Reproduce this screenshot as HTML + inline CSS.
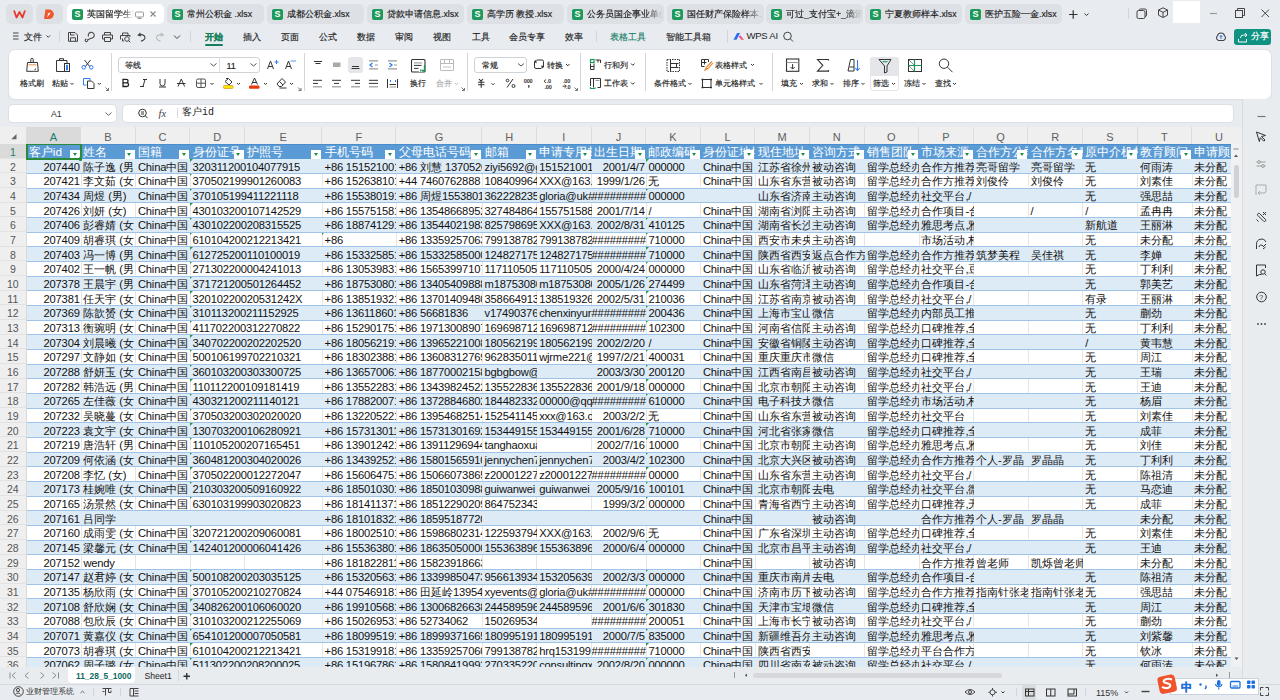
<!DOCTYPE html>
<html><head><meta charset="utf-8">
<style>
*{box-sizing:border-box;margin:0;padding:0}
html,body{width:1280px;height:700px;overflow:hidden}
body{position:relative;background:#e8ebef;font-family:"Liberation Sans",sans-serif;color:#222;font-size:12px}
.a{position:absolute;white-space:nowrap}
/* tabs */
.tab{position:absolute;top:4px;height:20px;width:97px;background:#dde0e5;border-radius:5px;overflow:hidden}
.tab.act{background:#fff}
.tab .s{position:absolute;left:5px;top:4.6px;width:11px;height:11px;background:#1d9a5b;border-radius:2px;color:#fff;font-size:9px;font-weight:bold;text-align:center;line-height:11px}
.tab .t{position:absolute;left:20px;top:2.2px;line-height:16px;font-size:8.8px;color:#1a1a1a;white-space:nowrap;width:76px;overflow:hidden;-webkit-text-stroke:0.15px #1a1a1a}
.tab .t.fd{-webkit-mask-image:linear-gradient(90deg,#000 78%,transparent 100%)}
.vl{position:absolute;top:0;width:1px;height:14px;background:#e6e6e6}
.apptab{position:absolute;top:4px;height:20px;width:27px;background:#dde0e5;border-radius:5px}
/* menu */
.menu{position:absolute;top:29.5px;font-size:8.8px;color:#1f1f1f;line-height:14px;white-space:nowrap;-webkit-text-stroke:0.15px currentColor}
.sep{position:absolute;width:1px;background:#d2d5d9}
/* ribbon */
#ribbon{position:absolute;left:9px;top:50px;width:1262px;height:49px;background:#fff;border-radius:6px;box-shadow:0 0 0 1px #dde0e4,0 1px 2px rgba(0,0,0,.05)}
.l{position:absolute;font-size:8.2px;color:#1a1a1a;white-space:nowrap;line-height:12px;-webkit-text-stroke:0.15px #1a1a1a}
.l.g{-webkit-text-stroke:0.15px #aaa}
.l.g{color:#aaa}
#icons{position:absolute;left:0;top:0;width:1280px;height:700px;pointer-events:none}
/* formula */
.box{position:absolute;background:#fff;border-radius:4px;box-shadow:0 0 0 1px #dcdfe3}
/* grid */
#colhdr{position:absolute;left:0;top:127px;width:1242px;height:17px;background:#efefef;overflow:hidden}
.ch{position:absolute;top:0;height:17px;line-height:21px;text-align:center;font-size:11px;color:#606060;border-right:1px solid #dddddd}
.ch.sel{background:#dadada;color:#1b7f6e}
.corner{position:absolute;left:0;top:0;width:26.6px;height:17px;border-right:1px solid #dddddd}
#grid{position:absolute;left:0;top:144px;width:1231px;height:522.7px;overflow:hidden;background:#fff}
.rh{position:absolute;left:0;width:26.6px;height:14.67px;background:#efefef;color:#555;font-size:10.5px;text-align:center;line-height:16.5px;border-bottom:1px solid #e2e2e2;border-right:1px solid #d8d8d8}
.rh.rsel{background:#dadada;color:#1b7f6e}
.row{position:absolute;left:26.6px;width:1220px;height:14.67px;background:#fff}
.row:after{content:'';position:absolute;left:0;right:0;bottom:-0.7px;height:1px;background:#9dc3e6;z-index:1}
.row.hdr:after{display:none}
.row.band{background:#ddebf7}
.row.hdr{background:#5b9bd5;border-top:1px solid #4a8ccc}
.c{position:absolute;top:0;height:14px;line-height:16px;font-size:11.2px;letter-spacing:-0.2px;color:#111;white-space:nowrap;overflow:hidden;padding-left:2.2px}
.c i{font-style:normal;font-size:11.3px;letter-spacing:0}
.c.r{text-align:right;padding-right:1.5px;padding-left:0}
.row.hdr .c{color:#fff;line-height:15.5px;height:13.67px;font-size:11.8px;letter-spacing:0}
.row.hdr .c i{font-size:12px}
.fb{position:absolute;top:4.5px;width:10px;height:10px;background:#fff}
.fb:after{content:"";position:absolute;left:2.5px;top:3.5px;border-left:2.5px solid transparent;border-right:2.5px solid transparent;border-top:3px solid #1e8b4a}
.tri{position:absolute;top:0;width:0;height:0;border-top:3px solid #1f9c3c;border-right:3px solid transparent}
.sel1{position:absolute;left:25.6px;top:-1px;width:56.2px;height:17px;border:2px solid #2a8a3a;z-index:3}
.sel1:after{content:'';position:absolute;right:-2.5px;bottom:-2.5px;width:3.5px;height:3.5px;background:#2a8a3a;border-radius:1px}
</style></head><body>

<!-- top tabs -->
<div class="apptab" style="left:6px"></div>
<div class="apptab" style="left:36px"></div>
<div class="tab act" style="left:67px"><div class="s">S</div><div class="t fd" style="width:47px">英国留学生数据</div></div>
<div class="tab" style="left:167px"><div class="s">S</div><div class="t">常州公积金 .xlsx</div></div>
<div class="tab" style="left:267px"><div class="s">S</div><div class="t">成都公积金.xlsx</div></div>
<div class="tab" style="left:367px"><div class="s">S</div><div class="t">贷款申请信息.xlsx</div></div>
<div class="tab" style="left:467px"><div class="s">S</div><div class="t">高学历 教授.xlsx</div></div>
<div class="tab" style="left:567px"><div class="s">S</div><div class="t fd">公务员国企事业单位位</div></div>
<div class="tab" style="left:667px"><div class="s">S</div><div class="t fd">国任财产保险样本.xlsx</div></div>
<div class="tab" style="left:766px"><div class="s">S</div><div class="t fd">可过_支付宝+_滴滴滴</div></div>
<div class="tab" style="left:865px"><div class="s">S</div><div class="t">宁夏教师样本.xlsx</div></div>
<div class="tab" style="left:965px"><div class="s">S</div><div class="t">医护五险一金.xlsx</div></div>
<div class="a" style="left:1173px;top:1px;width:27px;height:22px;background:#fff"></div>

<!-- menu row -->
<div class="menu" style="left:24px">文件</div>
<div class="menu" style="left:205px;color:#16805a;font-weight:bold">开始</div>
<div class="a" style="left:205px;top:44px;width:18px;height:2px;background:#16805a;border-radius:1px"></div>
<div class="menu" style="left:243px">插入</div>
<div class="menu" style="left:281px">页面</div>
<div class="menu" style="left:319px">公式</div>
<div class="menu" style="left:357px">数据</div>
<div class="menu" style="left:395px">审阅</div>
<div class="menu" style="left:433px">视图</div>
<div class="menu" style="left:472px">工具</div>
<div class="menu" style="left:509px">会员专享</div>
<div class="menu" style="left:565px">效率</div>
<div class="menu" style="left:610px;color:#1a7f6a">表格工具</div>
<div class="menu" style="left:666px">智能工具箱</div>
<div class="menu" style="left:746.5px;top:29.3px;font-size:9.6px;-webkit-text-stroke:0;letter-spacing:-0.3px">WPS AI</div>
<div class="sep" style="left:59px;top:31px;height:11px"></div>
<div class="sep" style="left:190px;top:31px;height:11px"></div>
<div class="sep" style="left:596px;top:31px;height:11px"></div>
<div class="sep" style="left:727px;top:30px;height:13px"></div>
<div class="sep" style="left:1128px;top:8px;height:11px"></div>
<div class="a" style="left:1234px;top:29px;width:37px;height:15.5px;background:#0f9282;border-radius:3px;color:#fff;font-size:9.2px;line-height:15.5px;padding-left:17px;-webkit-text-stroke:0.2px #fff">分享</div>

<!-- ribbon -->
<div id="ribbon"></div>
<div class="sep" style="left:111px;top:53px;height:38px"></div>
<div class="sep" style="left:304px;top:53px;height:38px"></div>
<div class="sep" style="left:467px;top:53px;height:38px"></div>
<div class="sep" style="left:580px;top:53px;height:38px"></div>
<div class="sep" style="left:645px;top:53px;height:38px"></div>
<div class="sep" style="left:772px;top:53px;height:38px"></div>
<!-- font boxes -->
<div class="a" style="left:117.5px;top:56.5px;width:142px;height:16px;border:1px solid #cfd2d6;border-radius:3px"></div>
<div class="a" style="left:219px;top:57px;width:1px;height:15px;background:#dcdfe3"></div>
<div class="a" style="left:473.5px;top:56.5px;width:53px;height:16px;border:1px solid #cfd2d6;border-radius:3px"></div>
<div class="a" style="left:347.5px;top:56.7px;width:15.5px;height:16px;background:#e4e6e9;border-radius:3px"></div>
<div class="a" style="left:870.3px;top:56.8px;width:28.5px;height:34px;border:1px solid #e2e4e7;border-radius:3px;background:#fff"></div>
<div class="a" style="left:870.3px;top:56.8px;width:28.5px;height:19.5px;background:#e4e6e9;border-radius:3px 3px 0 0"></div>

<div class="l" style="left:20px;top:78px">格式刷</div>
<div class="l" style="left:52px;top:78px">粘贴</div>
<div class="l" style="left:125px;top:60px">等线</div>
<div class="l" style="left:226.5px;top:60px;font-size:9px">11</div>
<div class="l" style="left:410px;top:78px">换行</div>
<div class="l g" style="left:436px;top:78px">合并</div>
<div class="l" style="left:482px;top:60px">常规</div>
<div class="l" style="left:546.5px;top:60px">转换</div>
<div class="l" style="left:603.5px;top:59.5px">行和列</div>
<div class="l" style="left:603.5px;top:78px">工作表</div>
<div class="l" style="left:654px;top:78px">条件格式</div>
<div class="l" style="left:715px;top:59.5px">表格样式</div>
<div class="l" style="left:715px;top:78px">单元格样式</div>
<div class="l" style="left:781.3px;top:78px">填充</div>
<div class="l" style="left:812px;top:78px">求和</div>
<div class="l" style="left:842.6px;top:78px">排序</div>
<div class="l" style="left:873.2px;top:78px">筛选</div>
<div class="l" style="left:903.7px;top:78px">冻结</div>
<div class="l" style="left:934.5px;top:78px">查找</div>

<!-- formula row -->
<div class="box" style="left:9px;top:105px;width:107px;height:17px"></div>
<div class="a" style="left:51px;top:108px;font-size:8.8px;line-height:12px;color:#333">A1</div>
<div class="box" style="left:123px;top:105px;width:1110px;height:17px"></div>
<div class="a" style="left:176.5px;top:108px;width:1px;height:10px;background:#d5d8dc"></div>
<div class="a" style="left:182px;top:106px;font-family:'Liberation Mono',monospace;font-size:10px;line-height:14px;color:#222">客户id</div>

<!-- right panel -->
<div class="a" style="left:1242px;top:99px;width:38px;height:585px;background:#e9ecef;border-left:1px solid #d9dcdf"></div>

<div id="colhdr">
<div class="ch sel" style="left:26.6px;width:54.6px">A</div>
<div class="ch" style="left:81.2px;width:54.6px">B</div>
<div class="ch" style="left:135.8px;width:54.6px">C</div>
<div class="ch" style="left:190.4px;width:54.6px">D</div>
<div class="ch" style="left:245px;width:77.4px">E</div>
<div class="ch" style="left:322.4px;width:74.1px">F</div>
<div class="ch" style="left:396.5px;width:85.9px">G</div>
<div class="ch" style="left:482.4px;width:54.6px">H</div>
<div class="ch" style="left:537px;width:54.6px">I</div>
<div class="ch" style="left:591.6px;width:54.6px">J</div>
<div class="ch" style="left:646.2px;width:54.6px">K</div>
<div class="ch" style="left:700.8px;width:54.6px">L</div>
<div class="ch" style="left:755.4px;width:54.6px">M</div>
<div class="ch" style="left:810px;width:54.6px">N</div>
<div class="ch" style="left:864.6px;width:54.6px">O</div>
<div class="ch" style="left:919.2px;width:54.6px">P</div>
<div class="ch" style="left:973.8px;width:54.6px">Q</div>
<div class="ch" style="left:1028.4px;width:54.6px">R</div>
<div class="ch" style="left:1083px;width:54.6px">S</div>
<div class="ch" style="left:1137.6px;width:54.6px">T</div>
<div class="ch" style="left:1192.2px;width:54.6px">U</div>
<div class="corner"></div></div>
<div id="grid">
<div class="rh rsel" style="top:0px">1</div>
<div class="row hdr" style="top:0px">
<div class="c" style="left:0px;width:54.6px"><i>客户</i>id</div>
<div class="fb" style="left:43.6px"></div>
<div class="c" style="left:54.6px;width:54.6px"><i>姓名</i></div>
<div class="fb" style="left:98.2px"></div>
<div class="c" style="left:109.2px;width:54.6px"><i>国籍</i></div>
<div class="fb" style="left:152.8px"></div>
<div class="c" style="left:163.8px;width:54.6px"><i>身份证号</i></div>
<div class="fb" style="left:207.4px"></div>
<div class="c" style="left:218.4px;width:77.4px"><i>护照号</i></div>
<div class="fb" style="left:284.8px"></div>
<div class="c" style="left:295.8px;width:74.1px"><i>手机号码</i></div>
<div class="fb" style="left:358.9px"></div>
<div class="c" style="left:369.9px;width:85.9px"><i>父母电话号码</i></div>
<div class="fb" style="left:444.8px"></div>
<div class="c" style="left:455.8px;width:54.6px"><i>邮箱</i></div>
<div class="fb" style="left:499.4px"></div>
<div class="c" style="left:510.4px;width:54.6px"><i>申请专用邮箱</i></div>
<div class="fb" style="left:554px"></div>
<div class="c" style="left:565px;width:54.6px"><i>出生日期</i></div>
<div class="fb" style="left:608.6px"></div>
<div class="c" style="left:619.6px;width:54.6px"><i>邮政编码</i></div>
<div class="fb" style="left:663.2px"></div>
<div class="c" style="left:674.2px;width:54.6px"><i>身份证地址</i></div>
<div class="fb" style="left:717.8px"></div>
<div class="c" style="left:728.8px;width:54.6px"><i>现住地址</i></div>
<div class="fb" style="left:772.4px"></div>
<div class="c" style="left:783.4px;width:54.6px"><i>咨询方式</i></div>
<div class="fb" style="left:827px"></div>
<div class="c" style="left:838px;width:54.6px"><i>销售团队</i></div>
<div class="fb" style="left:881.6px"></div>
<div class="c" style="left:892.6px;width:54.6px"><i>市场来源</i></div>
<div class="fb" style="left:936.2px"></div>
<div class="c" style="left:947.2px;width:54.6px"><i>合作方公司</i></div>
<div class="fb" style="left:990.8px"></div>
<div class="c" style="left:1001.8px;width:54.6px"><i>合作方名称</i></div>
<div class="fb" style="left:1045.4px"></div>
<div class="c" style="left:1056.4px;width:54.6px"><i>原中介机构</i></div>
<div class="fb" style="left:1100px"></div>
<div class="c" style="left:1111px;width:54.6px"><i>教育顾问</i></div>
<div class="fb" style="left:1154.6px"></div>
<div class="c" style="left:1165.6px;width:54.6px"><i>申请顾问</i></div>
<div class="fb" style="left:1209.2px"></div>
</div>
<div class="rh" style="top:14.67px">2</div>
<div class="row band" style="top:14.67px">
<div class="c r" style="left:0px;width:54.6px">207440</div>
<div class="c" style="left:54.6px;width:54.6px"><i>陈子逸</i> (<i>男</i></div>
<div class="c" style="left:109.2px;width:54.6px">China<i>中国</i></div>
<div class="c" style="left:163.8px;width:132px">320311200104077915</div>
<div class="tri" style="left:163.8px"></div>
<div class="c" style="left:295.8px;width:74.1px">+86 15152100123</div>
<div class="c" style="left:369.9px;width:85.9px">+86 <i>刘慧</i> 1370520</div>
<div class="c" style="left:455.8px;width:54.6px">ziyi5692@gmail</div>
<div class="c" style="left:510.4px;width:54.6px">151521001</div>
<div class="c r" style="left:565px;width:54.6px">2001/4/7</div>
<div class="c" style="left:619.6px;width:54.6px">000000</div>
<div class="tri" style="left:619.6px"></div>
<div class="c" style="left:674.2px;width:54.6px">China<i>中国</i></div>
<div class="c" style="left:728.8px;width:54.6px"><i>江苏省徐州</i></div>
<div class="c" style="left:783.4px;width:54.6px"><i>被动咨询</i></div>
<div class="c" style="left:838px;width:54.6px"><i>留学总经办</i></div>
<div class="c" style="left:892.6px;width:54.6px"><i>合作方推荐者</i></div>
<div class="c" style="left:947.2px;width:54.6px"><i>亮哥留学</i></div>
<div class="c" style="left:1001.8px;width:54.6px"><i>亮哥留学</i></div>
<div class="c" style="left:1056.4px;width:54.6px"><i>无</i></div>
<div class="c" style="left:1111px;width:54.6px"><i>何雨涛</i></div>
<div class="c" style="left:1165.6px;width:54.6px"><i>未分配</i></div>
</div>
<div class="rh" style="top:29.34px">3</div>
<div class="row" style="top:29.34px">
<div class="vl" style="left:54.1px"></div>
<div class="vl" style="left:108.7px"></div>
<div class="vl" style="left:163.3px"></div>
<div class="vl" style="left:295.3px"></div>
<div class="vl" style="left:369.4px"></div>
<div class="vl" style="left:455.3px"></div>
<div class="vl" style="left:509.9px"></div>
<div class="vl" style="left:564.5px"></div>
<div class="vl" style="left:619.1px"></div>
<div class="vl" style="left:673.7px"></div>
<div class="vl" style="left:728.3px"></div>
<div class="vl" style="left:782.9px"></div>
<div class="vl" style="left:837.5px"></div>
<div class="vl" style="left:892.1px"></div>
<div class="vl" style="left:946.7px"></div>
<div class="vl" style="left:1001.3px"></div>
<div class="vl" style="left:1055.9px"></div>
<div class="vl" style="left:1110.5px"></div>
<div class="vl" style="left:1165.1px"></div>
<div class="vl" style="left:1219.7px"></div>
<div class="c r" style="left:0px;width:54.6px">207421</div>
<div class="c" style="left:54.6px;width:54.6px"><i>李文茹</i> (<i>女</i></div>
<div class="c" style="left:109.2px;width:54.6px">China<i>中国</i></div>
<div class="c" style="left:163.8px;width:132px">370502199901260083</div>
<div class="tri" style="left:163.8px"></div>
<div class="c" style="left:295.8px;width:74.1px">+86 15263810123</div>
<div class="c" style="left:369.9px;width:85.9px">+44 7460762888</div>
<div class="c" style="left:455.8px;width:54.6px">1084099640</div>
<div class="c" style="left:510.4px;width:54.6px">XXX@163.com</div>
<div class="c r" style="left:565px;width:54.6px">1999/1/26</div>
<div class="c" style="left:619.6px;width:54.6px"><i>无</i></div>
<div class="c" style="left:674.2px;width:54.6px">China<i>中国</i></div>
<div class="c" style="left:728.8px;width:54.6px"><i>山东省东营</i></div>
<div class="c" style="left:783.4px;width:54.6px"><i>被动咨询</i></div>
<div class="c" style="left:838px;width:54.6px"><i>留学总经办</i></div>
<div class="c" style="left:892.6px;width:54.6px"><i>合作方推荐者</i></div>
<div class="c" style="left:947.2px;width:54.6px"><i>刘俊伶</i></div>
<div class="c" style="left:1001.8px;width:54.6px"><i>刘俊伶</i></div>
<div class="c" style="left:1056.4px;width:54.6px"><i>无</i></div>
<div class="c" style="left:1111px;width:54.6px"><i>刘素佳</i></div>
<div class="c" style="left:1165.6px;width:54.6px"><i>未分配</i></div>
</div>
<div class="rh" style="top:44.01px">4</div>
<div class="row band" style="top:44.01px">
<div class="c r" style="left:0px;width:54.6px">207434</div>
<div class="c" style="left:54.6px;width:54.6px"><i>周煜</i> (<i>男</i>)</div>
<div class="c" style="left:109.2px;width:54.6px">China<i>中国</i></div>
<div class="c" style="left:163.8px;width:132px">370105199411221118</div>
<div class="tri" style="left:163.8px"></div>
<div class="c" style="left:295.8px;width:74.1px">+86 15538019123</div>
<div class="c" style="left:369.9px;width:85.9px">+86 <i>周煜</i>15538019</div>
<div class="c" style="left:455.8px;width:54.6px">3622282350</div>
<div class="c" style="left:510.4px;width:54.6px">gloria@uk####</div>
<div class="c r" style="left:565px;width:54.6px">##########</div>
<div class="c" style="left:619.6px;width:54.6px">000000</div>
<div class="tri" style="left:619.6px"></div>
<div class="c" style="left:728.8px;width:54.6px"><i>山东省济南</i></div>
<div class="c" style="left:783.4px;width:54.6px"><i>主动咨询</i></div>
<div class="c" style="left:838px;width:54.6px"><i>留学总经办</i></div>
<div class="c" style="left:892.6px;width:54.6px"><i>社交平台</i>,/</div>
<div class="c" style="left:1056.4px;width:54.6px"><i>无</i></div>
<div class="c" style="left:1111px;width:54.6px"><i>强思喆</i></div>
<div class="c" style="left:1165.6px;width:54.6px"><i>未分配</i></div>
</div>
<div class="rh" style="top:58.68px">5</div>
<div class="row" style="top:58.68px">
<div class="vl" style="left:54.1px"></div>
<div class="vl" style="left:108.7px"></div>
<div class="vl" style="left:163.3px"></div>
<div class="vl" style="left:295.3px"></div>
<div class="vl" style="left:369.4px"></div>
<div class="vl" style="left:455.3px"></div>
<div class="vl" style="left:509.9px"></div>
<div class="vl" style="left:564.5px"></div>
<div class="vl" style="left:619.1px"></div>
<div class="vl" style="left:673.7px"></div>
<div class="vl" style="left:728.3px"></div>
<div class="vl" style="left:782.9px"></div>
<div class="vl" style="left:837.5px"></div>
<div class="vl" style="left:892.1px"></div>
<div class="vl" style="left:946.7px"></div>
<div class="vl" style="left:1001.3px"></div>
<div class="vl" style="left:1055.9px"></div>
<div class="vl" style="left:1110.5px"></div>
<div class="vl" style="left:1165.1px"></div>
<div class="vl" style="left:1219.7px"></div>
<div class="c r" style="left:0px;width:54.6px">207426</div>
<div class="c" style="left:54.6px;width:54.6px"><i>刘妍</i> (<i>女</i>)</div>
<div class="c" style="left:109.2px;width:54.6px">China<i>中国</i></div>
<div class="c" style="left:163.8px;width:132px">430103200107142529</div>
<div class="tri" style="left:163.8px"></div>
<div class="c" style="left:295.8px;width:74.1px">+86 15575158123</div>
<div class="c" style="left:369.9px;width:85.9px">+86 13548668952</div>
<div class="c" style="left:455.8px;width:54.6px">3274848640</div>
<div class="c" style="left:510.4px;width:54.6px">1557515880</div>
<div class="c r" style="left:565px;width:54.6px">2001/7/14</div>
<div class="c" style="left:619.6px;width:54.6px">/</div>
<div class="c" style="left:674.2px;width:54.6px">China<i>中国</i></div>
<div class="c" style="left:728.8px;width:54.6px"><i>湖南省浏阳</i></div>
<div class="c" style="left:783.4px;width:54.6px"><i>主动咨询</i></div>
<div class="c" style="left:838px;width:54.6px"><i>留学总经办</i></div>
<div class="c" style="left:892.6px;width:54.6px"><i>合作项目</i>-<i>合</i></div>
<div class="c" style="left:1001.8px;width:54.6px">/</div>
<div class="c" style="left:1056.4px;width:54.6px">/</div>
<div class="c" style="left:1111px;width:54.6px"><i>孟冉冉</i></div>
<div class="c" style="left:1165.6px;width:54.6px"><i>未分配</i></div>
</div>
<div class="rh" style="top:73.35px">6</div>
<div class="row band" style="top:73.35px">
<div class="c r" style="left:0px;width:54.6px">207406</div>
<div class="c" style="left:54.6px;width:54.6px"><i>彭睿婧</i> (<i>女</i></div>
<div class="c" style="left:109.2px;width:54.6px">China<i>中国</i></div>
<div class="c" style="left:163.8px;width:132px">430102200208315525</div>
<div class="tri" style="left:163.8px"></div>
<div class="c" style="left:295.8px;width:74.1px">+86 18874129123</div>
<div class="c" style="left:369.9px;width:85.9px">+86 13544021983</div>
<div class="c" style="left:455.8px;width:54.6px">8257986950</div>
<div class="c" style="left:510.4px;width:54.6px">XXX@163.com</div>
<div class="c r" style="left:565px;width:54.6px">2002/8/31</div>
<div class="c" style="left:619.6px;width:54.6px">410125</div>
<div class="tri" style="left:619.6px"></div>
<div class="c" style="left:674.2px;width:54.6px">China<i>中国</i></div>
<div class="c" style="left:728.8px;width:54.6px"><i>湖南省长沙</i></div>
<div class="c" style="left:783.4px;width:54.6px"><i>主动咨询</i></div>
<div class="c" style="left:838px;width:54.6px"><i>留学总经办</i></div>
<div class="c" style="left:892.6px;width:54.6px"><i>雅思考点</i>,<i>雅</i></div>
<div class="c" style="left:1056.4px;width:54.6px"><i>新航道</i></div>
<div class="c" style="left:1111px;width:54.6px"><i>王丽淋</i></div>
<div class="c" style="left:1165.6px;width:54.6px"><i>未分配</i></div>
</div>
<div class="rh" style="top:88.02px">7</div>
<div class="row" style="top:88.02px">
<div class="vl" style="left:54.1px"></div>
<div class="vl" style="left:108.7px"></div>
<div class="vl" style="left:163.3px"></div>
<div class="vl" style="left:295.3px"></div>
<div class="vl" style="left:369.4px"></div>
<div class="vl" style="left:455.3px"></div>
<div class="vl" style="left:509.9px"></div>
<div class="vl" style="left:564.5px"></div>
<div class="vl" style="left:619.1px"></div>
<div class="vl" style="left:673.7px"></div>
<div class="vl" style="left:728.3px"></div>
<div class="vl" style="left:782.9px"></div>
<div class="vl" style="left:837.5px"></div>
<div class="vl" style="left:892.1px"></div>
<div class="vl" style="left:946.7px"></div>
<div class="vl" style="left:1001.3px"></div>
<div class="vl" style="left:1055.9px"></div>
<div class="vl" style="left:1110.5px"></div>
<div class="vl" style="left:1165.1px"></div>
<div class="vl" style="left:1219.7px"></div>
<div class="c r" style="left:0px;width:54.6px">207409</div>
<div class="c" style="left:54.6px;width:54.6px"><i>胡睿琪</i> (<i>女</i></div>
<div class="c" style="left:109.2px;width:54.6px">China<i>中国</i></div>
<div class="c" style="left:163.8px;width:132px">610104200212213421</div>
<div class="tri" style="left:163.8px"></div>
<div class="c" style="left:295.8px;width:74.1px">+86</div>
<div class="tri" style="left:295.8px"></div>
<div class="c" style="left:369.9px;width:85.9px">+86 13359257063</div>
<div class="c" style="left:455.8px;width:54.6px">7991387820</div>
<div class="c" style="left:510.4px;width:54.6px">799138782####</div>
<div class="c r" style="left:565px;width:54.6px">##########</div>
<div class="c" style="left:619.6px;width:54.6px">710000</div>
<div class="tri" style="left:619.6px"></div>
<div class="c" style="left:674.2px;width:54.6px">China<i>中国</i></div>
<div class="c" style="left:728.8px;width:54.6px"><i>西安市未央</i></div>
<div class="c" style="left:783.4px;width:54.6px"><i>主动咨询</i></div>
<div class="c" style="left:892.6px;width:54.6px"><i>市场活动</i>,<i>村</i></div>
<div class="c" style="left:1056.4px;width:54.6px"><i>无</i></div>
<div class="c" style="left:1111px;width:54.6px"><i>未分配</i></div>
<div class="c" style="left:1165.6px;width:54.6px"><i>未分配</i></div>
</div>
<div class="rh" style="top:102.69px">8</div>
<div class="row band" style="top:102.69px">
<div class="c r" style="left:0px;width:54.6px">207403</div>
<div class="c" style="left:54.6px;width:54.6px"><i>冯一博</i> (<i>男</i></div>
<div class="c" style="left:109.2px;width:54.6px">China<i>中国</i></div>
<div class="c" style="left:163.8px;width:132px">612725200110100019</div>
<div class="tri" style="left:163.8px"></div>
<div class="c" style="left:295.8px;width:74.1px">+86 15332585123</div>
<div class="c" style="left:369.9px;width:85.9px">+86 15332585000</div>
<div class="c" style="left:455.8px;width:54.6px">1248271750</div>
<div class="c" style="left:510.4px;width:54.6px">124827175####</div>
<div class="c r" style="left:565px;width:54.6px">##########</div>
<div class="c" style="left:619.6px;width:54.6px">710000</div>
<div class="tri" style="left:619.6px"></div>
<div class="c" style="left:674.2px;width:54.6px">China<i>中国</i></div>
<div class="c" style="left:728.8px;width:54.6px"><i>陕西省西安</i></div>
<div class="c" style="left:783.4px;width:54.6px"><i>返点合作方</i></div>
<div class="c" style="left:838px;width:54.6px"><i>留学总经办</i></div>
<div class="c" style="left:892.6px;width:54.6px"><i>合作方推荐者</i></div>
<div class="c" style="left:947.2px;width:54.6px"><i>筑梦美程</i></div>
<div class="c" style="left:1001.8px;width:54.6px"><i>吴佳祺</i></div>
<div class="c" style="left:1056.4px;width:54.6px"><i>无</i></div>
<div class="c" style="left:1111px;width:54.6px"><i>李婵</i></div>
<div class="c" style="left:1165.6px;width:54.6px"><i>未分配</i></div>
</div>
<div class="rh" style="top:117.36px">9</div>
<div class="row" style="top:117.36px">
<div class="vl" style="left:54.1px"></div>
<div class="vl" style="left:108.7px"></div>
<div class="vl" style="left:163.3px"></div>
<div class="vl" style="left:295.3px"></div>
<div class="vl" style="left:369.4px"></div>
<div class="vl" style="left:455.3px"></div>
<div class="vl" style="left:509.9px"></div>
<div class="vl" style="left:564.5px"></div>
<div class="vl" style="left:619.1px"></div>
<div class="vl" style="left:673.7px"></div>
<div class="vl" style="left:728.3px"></div>
<div class="vl" style="left:782.9px"></div>
<div class="vl" style="left:837.5px"></div>
<div class="vl" style="left:892.1px"></div>
<div class="vl" style="left:946.7px"></div>
<div class="vl" style="left:1001.3px"></div>
<div class="vl" style="left:1055.9px"></div>
<div class="vl" style="left:1110.5px"></div>
<div class="vl" style="left:1165.1px"></div>
<div class="vl" style="left:1219.7px"></div>
<div class="c r" style="left:0px;width:54.6px">207402</div>
<div class="c" style="left:54.6px;width:54.6px"><i>王一帆</i> (<i>男</i></div>
<div class="c" style="left:109.2px;width:54.6px">China<i>中国</i></div>
<div class="c" style="left:163.8px;width:132px">271302200004241013</div>
<div class="tri" style="left:163.8px"></div>
<div class="c" style="left:295.8px;width:74.1px">+86 13053983123</div>
<div class="c" style="left:369.9px;width:85.9px">+86 15653997107</div>
<div class="c" style="left:455.8px;width:54.6px">1171105050</div>
<div class="c" style="left:510.4px;width:54.6px">1171105050</div>
<div class="c r" style="left:565px;width:54.6px">2000/4/24</div>
<div class="c" style="left:619.6px;width:54.6px">000000</div>
<div class="tri" style="left:619.6px"></div>
<div class="c" style="left:674.2px;width:54.6px">China<i>中国</i></div>
<div class="c" style="left:728.8px;width:54.6px"><i>山东省临沂</i></div>
<div class="c" style="left:783.4px;width:54.6px"><i>被动咨询</i></div>
<div class="c" style="left:838px;width:54.6px"><i>留学总经办</i></div>
<div class="c" style="left:892.6px;width:54.6px"><i>社交平台</i>,<i>豆</i></div>
<div class="c" style="left:1056.4px;width:54.6px"><i>无</i></div>
<div class="c" style="left:1111px;width:54.6px"><i>丁利利</i></div>
<div class="c" style="left:1165.6px;width:54.6px"><i>未分配</i></div>
</div>
<div class="rh" style="top:132.03px">10</div>
<div class="row band" style="top:132.03px">
<div class="c r" style="left:0px;width:54.6px">207378</div>
<div class="c" style="left:54.6px;width:54.6px"><i>王晨宇</i> (<i>男</i></div>
<div class="c" style="left:109.2px;width:54.6px">China<i>中国</i></div>
<div class="c" style="left:163.8px;width:132px">371721200501264452</div>
<div class="tri" style="left:163.8px"></div>
<div class="c" style="left:295.8px;width:74.1px">+86 18753080123</div>
<div class="c" style="left:369.9px;width:85.9px">+86 13405409888</div>
<div class="c" style="left:455.8px;width:54.6px">m18753080</div>
<div class="c" style="left:510.4px;width:54.6px">m18753080</div>
<div class="c r" style="left:565px;width:54.6px">2005/1/26</div>
<div class="c" style="left:619.6px;width:54.6px">274499</div>
<div class="tri" style="left:619.6px"></div>
<div class="c" style="left:674.2px;width:54.6px">China<i>中国</i></div>
<div class="c" style="left:728.8px;width:54.6px"><i>山东省菏泽</i></div>
<div class="c" style="left:783.4px;width:54.6px"><i>主动咨询</i></div>
<div class="c" style="left:838px;width:54.6px"><i>留学总经办</i></div>
<div class="c" style="left:892.6px;width:54.6px"><i>合作项目</i>-<i>合</i></div>
<div class="c" style="left:1056.4px;width:54.6px"><i>无</i></div>
<div class="c" style="left:1111px;width:54.6px"><i>郭美艺</i></div>
<div class="c" style="left:1165.6px;width:54.6px"><i>未分配</i></div>
</div>
<div class="rh" style="top:146.7px">11</div>
<div class="row" style="top:146.7px">
<div class="vl" style="left:54.1px"></div>
<div class="vl" style="left:108.7px"></div>
<div class="vl" style="left:163.3px"></div>
<div class="vl" style="left:295.3px"></div>
<div class="vl" style="left:369.4px"></div>
<div class="vl" style="left:455.3px"></div>
<div class="vl" style="left:509.9px"></div>
<div class="vl" style="left:564.5px"></div>
<div class="vl" style="left:619.1px"></div>
<div class="vl" style="left:673.7px"></div>
<div class="vl" style="left:728.3px"></div>
<div class="vl" style="left:782.9px"></div>
<div class="vl" style="left:837.5px"></div>
<div class="vl" style="left:892.1px"></div>
<div class="vl" style="left:946.7px"></div>
<div class="vl" style="left:1001.3px"></div>
<div class="vl" style="left:1055.9px"></div>
<div class="vl" style="left:1110.5px"></div>
<div class="vl" style="left:1165.1px"></div>
<div class="vl" style="left:1219.7px"></div>
<div class="c r" style="left:0px;width:54.6px">207381</div>
<div class="c" style="left:54.6px;width:54.6px"><i>任天宇</i> (<i>女</i></div>
<div class="c" style="left:109.2px;width:54.6px">China<i>中国</i></div>
<div class="c" style="left:163.8px;width:132px">32010220020531242X</div>
<div class="tri" style="left:163.8px"></div>
<div class="c" style="left:295.8px;width:74.1px">+86 13851932123</div>
<div class="c" style="left:369.9px;width:85.9px">+86 13701409480</div>
<div class="c" style="left:455.8px;width:54.6px">3586649130</div>
<div class="c" style="left:510.4px;width:54.6px">1385193260</div>
<div class="c r" style="left:565px;width:54.6px">2002/5/31</div>
<div class="c" style="left:619.6px;width:54.6px">210036</div>
<div class="tri" style="left:619.6px"></div>
<div class="c" style="left:674.2px;width:54.6px">China<i>中国</i></div>
<div class="c" style="left:728.8px;width:54.6px"><i>江苏省南京</i></div>
<div class="c" style="left:783.4px;width:54.6px"><i>被动咨询</i></div>
<div class="c" style="left:838px;width:54.6px"><i>留学总经办</i></div>
<div class="c" style="left:892.6px;width:54.6px"><i>社交平台</i>,/</div>
<div class="c" style="left:1056.4px;width:54.6px"><i>有录</i></div>
<div class="c" style="left:1111px;width:54.6px"><i>王丽淋</i></div>
<div class="c" style="left:1165.6px;width:54.6px"><i>未分配</i></div>
</div>
<div class="rh" style="top:161.37px">12</div>
<div class="row band" style="top:161.37px">
<div class="c r" style="left:0px;width:54.6px">207369</div>
<div class="c" style="left:54.6px;width:54.6px"><i>陈歆赟</i> (<i>女</i></div>
<div class="c" style="left:109.2px;width:54.6px">China<i>中国</i></div>
<div class="c" style="left:163.8px;width:132px">310113200211152925</div>
<div class="tri" style="left:163.8px"></div>
<div class="c" style="left:295.8px;width:74.1px">+86 13611860123</div>
<div class="c" style="left:369.9px;width:85.9px">+86 56681836</div>
<div class="c" style="left:455.8px;width:54.6px">v17490376</div>
<div class="c" style="left:510.4px;width:54.6px">chenxinyur###</div>
<div class="c r" style="left:565px;width:54.6px">##########</div>
<div class="c" style="left:619.6px;width:54.6px">200436</div>
<div class="tri" style="left:619.6px"></div>
<div class="c" style="left:674.2px;width:54.6px">China<i>中国</i></div>
<div class="c" style="left:728.8px;width:54.6px"><i>上海市宝山</i></div>
<div class="c" style="left:783.4px;width:54.6px"><i>微信</i></div>
<div class="c" style="left:838px;width:54.6px"><i>留学总经办</i></div>
<div class="c" style="left:892.6px;width:54.6px"><i>内部员工推荐</i></div>
<div class="c" style="left:1056.4px;width:54.6px"><i>无</i></div>
<div class="c" style="left:1111px;width:54.6px"><i>蒯劲</i></div>
<div class="c" style="left:1165.6px;width:54.6px"><i>未分配</i></div>
</div>
<div class="rh" style="top:176.04px">13</div>
<div class="row" style="top:176.04px">
<div class="vl" style="left:54.1px"></div>
<div class="vl" style="left:108.7px"></div>
<div class="vl" style="left:163.3px"></div>
<div class="vl" style="left:295.3px"></div>
<div class="vl" style="left:369.4px"></div>
<div class="vl" style="left:455.3px"></div>
<div class="vl" style="left:509.9px"></div>
<div class="vl" style="left:564.5px"></div>
<div class="vl" style="left:619.1px"></div>
<div class="vl" style="left:673.7px"></div>
<div class="vl" style="left:728.3px"></div>
<div class="vl" style="left:782.9px"></div>
<div class="vl" style="left:837.5px"></div>
<div class="vl" style="left:892.1px"></div>
<div class="vl" style="left:946.7px"></div>
<div class="vl" style="left:1001.3px"></div>
<div class="vl" style="left:1055.9px"></div>
<div class="vl" style="left:1110.5px"></div>
<div class="vl" style="left:1165.1px"></div>
<div class="vl" style="left:1219.7px"></div>
<div class="c r" style="left:0px;width:54.6px">207313</div>
<div class="c" style="left:54.6px;width:54.6px"><i>衡琬明</i> (<i>女</i></div>
<div class="c" style="left:109.2px;width:54.6px">China<i>中国</i></div>
<div class="c" style="left:163.8px;width:132px">411702200312270822</div>
<div class="tri" style="left:163.8px"></div>
<div class="c" style="left:295.8px;width:74.1px">+86 15290175123</div>
<div class="c" style="left:369.9px;width:85.9px">+86 19713008907</div>
<div class="c" style="left:455.8px;width:54.6px">1696987120</div>
<div class="c" style="left:510.4px;width:54.6px">169698712####</div>
<div class="c r" style="left:565px;width:54.6px">##########</div>
<div class="c" style="left:619.6px;width:54.6px">102300</div>
<div class="tri" style="left:619.6px"></div>
<div class="c" style="left:674.2px;width:54.6px">China<i>中国</i></div>
<div class="c" style="left:728.8px;width:54.6px"><i>河南省信阳</i></div>
<div class="c" style="left:783.4px;width:54.6px"><i>主动咨询</i></div>
<div class="c" style="left:838px;width:54.6px"><i>留学总经办</i></div>
<div class="c" style="left:892.6px;width:54.6px"><i>口碑推荐</i>,<i>全</i></div>
<div class="c" style="left:1056.4px;width:54.6px"><i>无</i></div>
<div class="c" style="left:1111px;width:54.6px"><i>丁利利</i></div>
<div class="c" style="left:1165.6px;width:54.6px"><i>未分配</i></div>
</div>
<div class="rh" style="top:190.71px">14</div>
<div class="row band" style="top:190.71px">
<div class="c r" style="left:0px;width:54.6px">207304</div>
<div class="c" style="left:54.6px;width:54.6px"><i>刘晨曦</i> (<i>女</i></div>
<div class="c" style="left:109.2px;width:54.6px">China<i>中国</i></div>
<div class="c" style="left:163.8px;width:132px">340702200202202520</div>
<div class="tri" style="left:163.8px"></div>
<div class="c" style="left:295.8px;width:74.1px">+86 18056219123</div>
<div class="c" style="left:369.9px;width:85.9px">+86 13965221008</div>
<div class="c" style="left:455.8px;width:54.6px">1805621990</div>
<div class="c" style="left:510.4px;width:54.6px">1805621990</div>
<div class="c r" style="left:565px;width:54.6px">2002/2/20</div>
<div class="c" style="left:619.6px;width:54.6px">/</div>
<div class="c" style="left:674.2px;width:54.6px">China<i>中国</i></div>
<div class="c" style="left:728.8px;width:54.6px"><i>安徽省铜陵</i></div>
<div class="c" style="left:783.4px;width:54.6px"><i>主动咨询</i></div>
<div class="c" style="left:838px;width:54.6px"><i>留学总经办</i></div>
<div class="c" style="left:892.6px;width:54.6px"><i>口碑推荐</i>,<i>全</i></div>
<div class="c" style="left:1056.4px;width:54.6px">/</div>
<div class="c" style="left:1111px;width:54.6px"><i>黄韦慧</i></div>
<div class="c" style="left:1165.6px;width:54.6px"><i>未分配</i></div>
</div>
<div class="rh" style="top:205.38px">15</div>
<div class="row" style="top:205.38px">
<div class="vl" style="left:54.1px"></div>
<div class="vl" style="left:108.7px"></div>
<div class="vl" style="left:163.3px"></div>
<div class="vl" style="left:295.3px"></div>
<div class="vl" style="left:369.4px"></div>
<div class="vl" style="left:455.3px"></div>
<div class="vl" style="left:509.9px"></div>
<div class="vl" style="left:564.5px"></div>
<div class="vl" style="left:619.1px"></div>
<div class="vl" style="left:673.7px"></div>
<div class="vl" style="left:728.3px"></div>
<div class="vl" style="left:782.9px"></div>
<div class="vl" style="left:837.5px"></div>
<div class="vl" style="left:892.1px"></div>
<div class="vl" style="left:946.7px"></div>
<div class="vl" style="left:1001.3px"></div>
<div class="vl" style="left:1055.9px"></div>
<div class="vl" style="left:1110.5px"></div>
<div class="vl" style="left:1165.1px"></div>
<div class="vl" style="left:1219.7px"></div>
<div class="c r" style="left:0px;width:54.6px">207297</div>
<div class="c" style="left:54.6px;width:54.6px"><i>文静如</i> (<i>女</i></div>
<div class="c" style="left:109.2px;width:54.6px">China<i>中国</i></div>
<div class="c" style="left:163.8px;width:132px">500106199702210321</div>
<div class="tri" style="left:163.8px"></div>
<div class="c" style="left:295.8px;width:74.1px">+86 18302388123</div>
<div class="c" style="left:369.9px;width:85.9px">+86 13608312769</div>
<div class="c" style="left:455.8px;width:54.6px">9628350110</div>
<div class="c" style="left:510.4px;width:54.6px">wjrme221@</div>
<div class="c r" style="left:565px;width:54.6px">1997/2/21</div>
<div class="c" style="left:619.6px;width:54.6px">400031</div>
<div class="tri" style="left:619.6px"></div>
<div class="c" style="left:674.2px;width:54.6px">China<i>中国</i></div>
<div class="c" style="left:728.8px;width:54.6px"><i>重庆重庆市</i></div>
<div class="c" style="left:783.4px;width:54.6px"><i>微信</i></div>
<div class="c" style="left:838px;width:54.6px"><i>留学总经办</i></div>
<div class="c" style="left:892.6px;width:54.6px"><i>口碑推荐</i>,<i>全</i></div>
<div class="c" style="left:1056.4px;width:54.6px"><i>无</i></div>
<div class="c" style="left:1111px;width:54.6px"><i>周江</i></div>
<div class="c" style="left:1165.6px;width:54.6px"><i>未分配</i></div>
</div>
<div class="rh" style="top:220.05px">16</div>
<div class="row band" style="top:220.05px">
<div class="c r" style="left:0px;width:54.6px">207288</div>
<div class="c" style="left:54.6px;width:54.6px"><i>舒妍玉</i> (<i>女</i></div>
<div class="c" style="left:109.2px;width:54.6px">China<i>中国</i></div>
<div class="c" style="left:163.8px;width:132px">360103200303300725</div>
<div class="tri" style="left:163.8px"></div>
<div class="c" style="left:295.8px;width:74.1px">+86 13657006123</div>
<div class="c" style="left:369.9px;width:85.9px">+86 18770002158</div>
<div class="c" style="left:455.8px;width:54.6px">bgbgbow@</div>
<div class="c r" style="left:565px;width:54.6px">2003/3/30</div>
<div class="c" style="left:619.6px;width:54.6px">200120</div>
<div class="tri" style="left:619.6px"></div>
<div class="c" style="left:674.2px;width:54.6px">China<i>中国</i></div>
<div class="c" style="left:728.8px;width:54.6px"><i>江西省南昌</i></div>
<div class="c" style="left:783.4px;width:54.6px"><i>被动咨询</i></div>
<div class="c" style="left:838px;width:54.6px"><i>留学总经办</i></div>
<div class="c" style="left:892.6px;width:54.6px"><i>社交平台</i>,/</div>
<div class="c" style="left:1056.4px;width:54.6px"><i>无</i></div>
<div class="c" style="left:1111px;width:54.6px"><i>王瑞</i></div>
<div class="c" style="left:1165.6px;width:54.6px"><i>未分配</i></div>
</div>
<div class="rh" style="top:234.72px">17</div>
<div class="row" style="top:234.72px">
<div class="vl" style="left:54.1px"></div>
<div class="vl" style="left:108.7px"></div>
<div class="vl" style="left:163.3px"></div>
<div class="vl" style="left:295.3px"></div>
<div class="vl" style="left:369.4px"></div>
<div class="vl" style="left:455.3px"></div>
<div class="vl" style="left:509.9px"></div>
<div class="vl" style="left:564.5px"></div>
<div class="vl" style="left:619.1px"></div>
<div class="vl" style="left:673.7px"></div>
<div class="vl" style="left:728.3px"></div>
<div class="vl" style="left:782.9px"></div>
<div class="vl" style="left:837.5px"></div>
<div class="vl" style="left:892.1px"></div>
<div class="vl" style="left:946.7px"></div>
<div class="vl" style="left:1001.3px"></div>
<div class="vl" style="left:1055.9px"></div>
<div class="vl" style="left:1110.5px"></div>
<div class="vl" style="left:1165.1px"></div>
<div class="vl" style="left:1219.7px"></div>
<div class="c r" style="left:0px;width:54.6px">207282</div>
<div class="c" style="left:54.6px;width:54.6px"><i>韩浩远</i> (<i>男</i></div>
<div class="c" style="left:109.2px;width:54.6px">China<i>中国</i></div>
<div class="c" style="left:163.8px;width:132px">110112200109181419</div>
<div class="tri" style="left:163.8px"></div>
<div class="c" style="left:295.8px;width:74.1px">+86 13552283123</div>
<div class="c" style="left:369.9px;width:85.9px">+86 13439824522</div>
<div class="c" style="left:455.8px;width:54.6px">1355228360</div>
<div class="c" style="left:510.4px;width:54.6px">1355228360</div>
<div class="c r" style="left:565px;width:54.6px">2001/9/18</div>
<div class="c" style="left:619.6px;width:54.6px">000000</div>
<div class="tri" style="left:619.6px"></div>
<div class="c" style="left:674.2px;width:54.6px">China<i>中国</i></div>
<div class="c" style="left:728.8px;width:54.6px"><i>北京市朝阳</i></div>
<div class="c" style="left:783.4px;width:54.6px"><i>主动咨询</i></div>
<div class="c" style="left:838px;width:54.6px"><i>留学总经办</i></div>
<div class="c" style="left:892.6px;width:54.6px"><i>社交平台</i>,/</div>
<div class="c" style="left:1056.4px;width:54.6px"><i>无</i></div>
<div class="c" style="left:1111px;width:54.6px"><i>王迪</i></div>
<div class="c" style="left:1165.6px;width:54.6px"><i>未分配</i></div>
</div>
<div class="rh" style="top:249.39px">18</div>
<div class="row band" style="top:249.39px">
<div class="c r" style="left:0px;width:54.6px">207265</div>
<div class="c" style="left:54.6px;width:54.6px"><i>左佳薇</i> (<i>女</i></div>
<div class="c" style="left:109.2px;width:54.6px">China<i>中国</i></div>
<div class="c" style="left:163.8px;width:132px">430321200211140121</div>
<div class="tri" style="left:163.8px"></div>
<div class="c" style="left:295.8px;width:74.1px">+86 17882007123</div>
<div class="c" style="left:369.9px;width:85.9px">+86 13728846802</div>
<div class="c" style="left:455.8px;width:54.6px">1844823320</div>
<div class="c" style="left:510.4px;width:54.6px">00000@qq.com</div>
<div class="c r" style="left:565px;width:54.6px">##########</div>
<div class="c" style="left:619.6px;width:54.6px">610000</div>
<div class="tri" style="left:619.6px"></div>
<div class="c" style="left:674.2px;width:54.6px">China<i>中国</i></div>
<div class="c" style="left:728.8px;width:54.6px"><i>电子科技大</i></div>
<div class="c" style="left:783.4px;width:54.6px"><i>微信</i></div>
<div class="c" style="left:838px;width:54.6px"><i>留学总经办</i></div>
<div class="c" style="left:892.6px;width:54.6px"><i>市场活动</i>,<i>村</i></div>
<div class="c" style="left:1056.4px;width:54.6px"><i>无</i></div>
<div class="c" style="left:1111px;width:54.6px"><i>杨眉</i></div>
<div class="c" style="left:1165.6px;width:54.6px"><i>未分配</i></div>
</div>
<div class="rh" style="top:264.06px">19</div>
<div class="row" style="top:264.06px">
<div class="vl" style="left:54.1px"></div>
<div class="vl" style="left:108.7px"></div>
<div class="vl" style="left:163.3px"></div>
<div class="vl" style="left:295.3px"></div>
<div class="vl" style="left:369.4px"></div>
<div class="vl" style="left:455.3px"></div>
<div class="vl" style="left:509.9px"></div>
<div class="vl" style="left:564.5px"></div>
<div class="vl" style="left:619.1px"></div>
<div class="vl" style="left:673.7px"></div>
<div class="vl" style="left:728.3px"></div>
<div class="vl" style="left:782.9px"></div>
<div class="vl" style="left:837.5px"></div>
<div class="vl" style="left:892.1px"></div>
<div class="vl" style="left:946.7px"></div>
<div class="vl" style="left:1001.3px"></div>
<div class="vl" style="left:1055.9px"></div>
<div class="vl" style="left:1110.5px"></div>
<div class="vl" style="left:1165.1px"></div>
<div class="vl" style="left:1219.7px"></div>
<div class="c r" style="left:0px;width:54.6px">207232</div>
<div class="c" style="left:54.6px;width:54.6px"><i>吴晓蔓</i> (<i>女</i></div>
<div class="c" style="left:109.2px;width:54.6px">China<i>中国</i></div>
<div class="c" style="left:163.8px;width:132px">370503200302020020</div>
<div class="tri" style="left:163.8px"></div>
<div class="c" style="left:295.8px;width:74.1px">+86 13220522123</div>
<div class="c" style="left:369.9px;width:85.9px">+86 13954682514</div>
<div class="c" style="left:455.8px;width:54.6px">1525411450</div>
<div class="c" style="left:510.4px;width:54.6px">xxx@163.com</div>
<div class="c r" style="left:565px;width:54.6px">2003/2/2</div>
<div class="c" style="left:619.6px;width:54.6px"><i>无</i></div>
<div class="c" style="left:674.2px;width:54.6px">China<i>中国</i></div>
<div class="c" style="left:728.8px;width:54.6px"><i>山东省东营</i></div>
<div class="c" style="left:783.4px;width:54.6px"><i>被动咨询</i></div>
<div class="c" style="left:838px;width:54.6px"><i>留学总经办</i></div>
<div class="c" style="left:892.6px;width:54.6px"><i>社交平台</i></div>
<div class="c" style="left:1056.4px;width:54.6px"><i>无</i></div>
<div class="c" style="left:1111px;width:54.6px"><i>刘素佳</i></div>
<div class="c" style="left:1165.6px;width:54.6px"><i>未分配</i></div>
</div>
<div class="rh" style="top:278.73px">20</div>
<div class="row band" style="top:278.73px">
<div class="c r" style="left:0px;width:54.6px">207223</div>
<div class="c" style="left:54.6px;width:54.6px"><i>袁文宇</i> (<i>女</i></div>
<div class="c" style="left:109.2px;width:54.6px">China<i>中国</i></div>
<div class="c" style="left:163.8px;width:132px">130703200106280921</div>
<div class="tri" style="left:163.8px"></div>
<div class="c" style="left:295.8px;width:74.1px">+86 15731301123</div>
<div class="c" style="left:369.9px;width:85.9px">+86 15731301692</div>
<div class="c" style="left:455.8px;width:54.6px">1534491550</div>
<div class="c" style="left:510.4px;width:54.6px">1534491550</div>
<div class="c r" style="left:565px;width:54.6px">2001/6/28</div>
<div class="c" style="left:619.6px;width:54.6px">710000</div>
<div class="tri" style="left:619.6px"></div>
<div class="c" style="left:674.2px;width:54.6px">China<i>中国</i></div>
<div class="c" style="left:728.8px;width:54.6px"><i>河北省张家</i></div>
<div class="c" style="left:783.4px;width:54.6px"><i>微信</i></div>
<div class="c" style="left:838px;width:54.6px"><i>留学总经办</i></div>
<div class="c" style="left:892.6px;width:54.6px"><i>口碑推荐</i>,<i>全</i></div>
<div class="c" style="left:1056.4px;width:54.6px"><i>无</i></div>
<div class="c" style="left:1111px;width:54.6px"><i>成菲</i></div>
<div class="c" style="left:1165.6px;width:54.6px"><i>未分配</i></div>
</div>
<div class="rh" style="top:293.4px">21</div>
<div class="row" style="top:293.4px">
<div class="vl" style="left:54.1px"></div>
<div class="vl" style="left:108.7px"></div>
<div class="vl" style="left:163.3px"></div>
<div class="vl" style="left:295.3px"></div>
<div class="vl" style="left:369.4px"></div>
<div class="vl" style="left:455.3px"></div>
<div class="vl" style="left:509.9px"></div>
<div class="vl" style="left:564.5px"></div>
<div class="vl" style="left:619.1px"></div>
<div class="vl" style="left:673.7px"></div>
<div class="vl" style="left:728.3px"></div>
<div class="vl" style="left:782.9px"></div>
<div class="vl" style="left:837.5px"></div>
<div class="vl" style="left:892.1px"></div>
<div class="vl" style="left:946.7px"></div>
<div class="vl" style="left:1001.3px"></div>
<div class="vl" style="left:1055.9px"></div>
<div class="vl" style="left:1110.5px"></div>
<div class="vl" style="left:1165.1px"></div>
<div class="vl" style="left:1219.7px"></div>
<div class="c r" style="left:0px;width:54.6px">207219</div>
<div class="c" style="left:54.6px;width:54.6px"><i>唐浩轩</i> (<i>男</i></div>
<div class="c" style="left:109.2px;width:54.6px">China<i>中国</i></div>
<div class="c" style="left:163.8px;width:132px">110105200207165451</div>
<div class="tri" style="left:163.8px"></div>
<div class="c" style="left:295.8px;width:74.1px">+86 13901242123</div>
<div class="c" style="left:369.9px;width:85.9px">+86 13911296944</div>
<div class="c" style="left:455.8px;width:54.6px">tanghaoxuan</div>
<div class="c r" style="left:565px;width:54.6px">2002/7/16</div>
<div class="c" style="left:619.6px;width:54.6px">10000</div>
<div class="tri" style="left:619.6px"></div>
<div class="c" style="left:674.2px;width:54.6px">China<i>中国</i></div>
<div class="c" style="left:728.8px;width:54.6px"><i>北京市朝阳</i></div>
<div class="c" style="left:783.4px;width:54.6px"><i>主动咨询</i></div>
<div class="c" style="left:838px;width:54.6px"><i>留学总经办</i></div>
<div class="c" style="left:892.6px;width:54.6px"><i>雅思考点</i>,<i>雅</i></div>
<div class="c" style="left:1056.4px;width:54.6px"><i>无</i></div>
<div class="c" style="left:1111px;width:54.6px"><i>刘佳</i></div>
<div class="c" style="left:1165.6px;width:54.6px"><i>未分配</i></div>
</div>
<div class="rh" style="top:308.07px">22</div>
<div class="row band" style="top:308.07px">
<div class="c r" style="left:0px;width:54.6px">207209</div>
<div class="c" style="left:54.6px;width:54.6px"><i>何依涵</i> (<i>女</i></div>
<div class="c" style="left:109.2px;width:54.6px">China<i>中国</i></div>
<div class="c" style="left:163.8px;width:132px">360481200304020026</div>
<div class="tri" style="left:163.8px"></div>
<div class="c" style="left:295.8px;width:74.1px">+86 13439252123</div>
<div class="c" style="left:369.9px;width:85.9px">+86 15801565910</div>
<div class="c" style="left:455.8px;width:54.6px">jennychen7</div>
<div class="c" style="left:510.4px;width:54.6px">jennychen7</div>
<div class="c r" style="left:565px;width:54.6px">2003/4/2</div>
<div class="c" style="left:619.6px;width:54.6px">102300</div>
<div class="tri" style="left:619.6px"></div>
<div class="c" style="left:674.2px;width:54.6px">China<i>中国</i></div>
<div class="c" style="left:728.8px;width:54.6px"><i>北京大兴区</i></div>
<div class="c" style="left:783.4px;width:54.6px"><i>被动咨询</i></div>
<div class="c" style="left:838px;width:54.6px"><i>留学总经办</i></div>
<div class="c" style="left:892.6px;width:54.6px"><i>合作方推荐者</i></div>
<div class="c" style="left:947.2px;width:54.6px"><i>个人</i>-<i>罗晶</i></div>
<div class="c" style="left:1001.8px;width:54.6px"><i>罗晶晶</i></div>
<div class="c" style="left:1056.4px;width:54.6px"><i>无</i></div>
<div class="c" style="left:1111px;width:54.6px"><i>丁利利</i></div>
<div class="c" style="left:1165.6px;width:54.6px"><i>未分配</i></div>
</div>
<div class="rh" style="top:322.74px">23</div>
<div class="row" style="top:322.74px">
<div class="vl" style="left:54.1px"></div>
<div class="vl" style="left:108.7px"></div>
<div class="vl" style="left:163.3px"></div>
<div class="vl" style="left:295.3px"></div>
<div class="vl" style="left:369.4px"></div>
<div class="vl" style="left:455.3px"></div>
<div class="vl" style="left:509.9px"></div>
<div class="vl" style="left:564.5px"></div>
<div class="vl" style="left:619.1px"></div>
<div class="vl" style="left:673.7px"></div>
<div class="vl" style="left:728.3px"></div>
<div class="vl" style="left:782.9px"></div>
<div class="vl" style="left:837.5px"></div>
<div class="vl" style="left:892.1px"></div>
<div class="vl" style="left:946.7px"></div>
<div class="vl" style="left:1001.3px"></div>
<div class="vl" style="left:1055.9px"></div>
<div class="vl" style="left:1110.5px"></div>
<div class="vl" style="left:1165.1px"></div>
<div class="vl" style="left:1219.7px"></div>
<div class="c r" style="left:0px;width:54.6px">207208</div>
<div class="c" style="left:54.6px;width:54.6px"><i>李忆</i> (<i>女</i>)</div>
<div class="c" style="left:109.2px;width:54.6px">China<i>中国</i></div>
<div class="c" style="left:163.8px;width:132px">370502200012272047</div>
<div class="tri" style="left:163.8px"></div>
<div class="c" style="left:295.8px;width:74.1px">+86 15606475123</div>
<div class="c" style="left:369.9px;width:85.9px">+86 15066073865</div>
<div class="c" style="left:455.8px;width:54.6px">z20001227</div>
<div class="c" style="left:510.4px;width:54.6px">z20001227</div>
<div class="c r" style="left:565px;width:54.6px">##########</div>
<div class="c" style="left:619.6px;width:54.6px">00000</div>
<div class="tri" style="left:619.6px"></div>
<div class="c" style="left:674.2px;width:54.6px">China<i>中国</i></div>
<div class="c" style="left:728.8px;width:54.6px"><i>山东省东营</i></div>
<div class="c" style="left:783.4px;width:54.6px"><i>主动咨询</i></div>
<div class="c" style="left:838px;width:54.6px"><i>留学总经办</i></div>
<div class="c" style="left:892.6px;width:54.6px"><i>社交平台</i>,/</div>
<div class="c" style="left:1056.4px;width:54.6px"><i>无</i></div>
<div class="c" style="left:1111px;width:54.6px"><i>陈祖清</i></div>
<div class="c" style="left:1165.6px;width:54.6px"><i>未分配</i></div>
</div>
<div class="rh" style="top:337.41px">24</div>
<div class="row band" style="top:337.41px">
<div class="c r" style="left:0px;width:54.6px">207173</div>
<div class="c" style="left:54.6px;width:54.6px"><i>桂婉唯</i> (<i>女</i></div>
<div class="c" style="left:109.2px;width:54.6px">China<i>中国</i></div>
<div class="c" style="left:163.8px;width:132px">210303200509160922</div>
<div class="tri" style="left:163.8px"></div>
<div class="c" style="left:295.8px;width:74.1px">+86 18501030123</div>
<div class="c" style="left:369.9px;width:85.9px">+86 18501030988</div>
<div class="c" style="left:455.8px;width:54.6px">guiwanwei</div>
<div class="c" style="left:510.4px;width:54.6px">guiwanwei</div>
<div class="c r" style="left:565px;width:54.6px">2005/9/16</div>
<div class="c" style="left:619.6px;width:54.6px">100101</div>
<div class="tri" style="left:619.6px"></div>
<div class="c" style="left:674.2px;width:54.6px">China<i>中国</i></div>
<div class="c" style="left:728.8px;width:54.6px"><i>北京市朝阳</i></div>
<div class="c" style="left:783.4px;width:54.6px"><i>去电</i></div>
<div class="c" style="left:838px;width:54.6px"><i>留学总经办</i></div>
<div class="c" style="left:892.6px;width:54.6px"><i>社交平台</i>,<i>微</i></div>
<div class="c" style="left:1056.4px;width:54.6px"><i>无</i></div>
<div class="c" style="left:1111px;width:54.6px"><i>马恋迪</i></div>
<div class="c" style="left:1165.6px;width:54.6px"><i>未分配</i></div>
</div>
<div class="rh" style="top:352.08px">25</div>
<div class="row" style="top:352.08px">
<div class="vl" style="left:54.1px"></div>
<div class="vl" style="left:108.7px"></div>
<div class="vl" style="left:163.3px"></div>
<div class="vl" style="left:295.3px"></div>
<div class="vl" style="left:369.4px"></div>
<div class="vl" style="left:455.3px"></div>
<div class="vl" style="left:509.9px"></div>
<div class="vl" style="left:564.5px"></div>
<div class="vl" style="left:619.1px"></div>
<div class="vl" style="left:673.7px"></div>
<div class="vl" style="left:728.3px"></div>
<div class="vl" style="left:782.9px"></div>
<div class="vl" style="left:837.5px"></div>
<div class="vl" style="left:892.1px"></div>
<div class="vl" style="left:946.7px"></div>
<div class="vl" style="left:1001.3px"></div>
<div class="vl" style="left:1055.9px"></div>
<div class="vl" style="left:1110.5px"></div>
<div class="vl" style="left:1165.1px"></div>
<div class="vl" style="left:1219.7px"></div>
<div class="c r" style="left:0px;width:54.6px">207165</div>
<div class="c" style="left:54.6px;width:54.6px"><i>汤景然</i> (<i>女</i></div>
<div class="c" style="left:109.2px;width:54.6px">China<i>中国</i></div>
<div class="c" style="left:163.8px;width:132px">630103199903020823</div>
<div class="tri" style="left:163.8px"></div>
<div class="c" style="left:295.8px;width:74.1px">+86 18141137123</div>
<div class="c" style="left:369.9px;width:85.9px">+86 18512290209</div>
<div class="c" style="left:455.8px;width:54.6px">864752343</div>
<div class="c r" style="left:565px;width:54.6px">1999/3/2</div>
<div class="c" style="left:619.6px;width:54.6px">000000</div>
<div class="tri" style="left:619.6px"></div>
<div class="c" style="left:674.2px;width:54.6px">China<i>中国</i></div>
<div class="c" style="left:728.8px;width:54.6px"><i>青海省西宁</i></div>
<div class="c" style="left:783.4px;width:54.6px"><i>主动咨询</i></div>
<div class="c" style="left:838px;width:54.6px"><i>留学总经办</i></div>
<div class="c" style="left:892.6px;width:54.6px"><i>口碑推荐</i>,<i>无</i></div>
<div class="c" style="left:1056.4px;width:54.6px"><i>无</i></div>
<div class="c" style="left:1111px;width:54.6px"><i>成菲</i></div>
<div class="c" style="left:1165.6px;width:54.6px"><i>未分配</i></div>
</div>
<div class="rh" style="top:366.75px">26</div>
<div class="row band" style="top:366.75px">
<div class="c r" style="left:0px;width:54.6px">207161</div>
<div class="c" style="left:54.6px;width:54.6px"><i>吕同学</i></div>
<div class="c" style="left:295.8px;width:74.1px">+86 18101832123</div>
<div class="c" style="left:369.9px;width:85.9px">+86 18595187720</div>
<div class="c" style="left:674.2px;width:54.6px">China<i>中国</i></div>
<div class="c" style="left:783.4px;width:54.6px"><i>被动咨询</i></div>
<div class="c" style="left:892.6px;width:54.6px"><i>合作方推荐者</i></div>
<div class="c" style="left:947.2px;width:54.6px"><i>个人</i>-<i>罗晶</i></div>
<div class="c" style="left:1001.8px;width:54.6px"><i>罗晶晶</i></div>
<div class="c" style="left:1111px;width:54.6px"><i>未分配</i></div>
<div class="c" style="left:1165.6px;width:54.6px"><i>未分配</i></div>
</div>
<div class="rh" style="top:381.42px">27</div>
<div class="row" style="top:381.42px">
<div class="vl" style="left:54.1px"></div>
<div class="vl" style="left:108.7px"></div>
<div class="vl" style="left:163.3px"></div>
<div class="vl" style="left:295.3px"></div>
<div class="vl" style="left:369.4px"></div>
<div class="vl" style="left:455.3px"></div>
<div class="vl" style="left:509.9px"></div>
<div class="vl" style="left:564.5px"></div>
<div class="vl" style="left:619.1px"></div>
<div class="vl" style="left:673.7px"></div>
<div class="vl" style="left:728.3px"></div>
<div class="vl" style="left:782.9px"></div>
<div class="vl" style="left:837.5px"></div>
<div class="vl" style="left:892.1px"></div>
<div class="vl" style="left:946.7px"></div>
<div class="vl" style="left:1001.3px"></div>
<div class="vl" style="left:1055.9px"></div>
<div class="vl" style="left:1110.5px"></div>
<div class="vl" style="left:1165.1px"></div>
<div class="vl" style="left:1219.7px"></div>
<div class="c r" style="left:0px;width:54.6px">207160</div>
<div class="c" style="left:54.6px;width:54.6px"><i>成雨雯</i> (<i>女</i></div>
<div class="c" style="left:109.2px;width:54.6px">China<i>中国</i></div>
<div class="c" style="left:163.8px;width:132px">320721200209060081</div>
<div class="tri" style="left:163.8px"></div>
<div class="c" style="left:295.8px;width:74.1px">+86 18002510123</div>
<div class="c" style="left:369.9px;width:85.9px">+86 15986802314</div>
<div class="c" style="left:455.8px;width:54.6px">1225937940</div>
<div class="c" style="left:510.4px;width:54.6px">XXX@163.com</div>
<div class="c r" style="left:565px;width:54.6px">2002/9/6</div>
<div class="c" style="left:619.6px;width:54.6px"><i>无</i></div>
<div class="c" style="left:674.2px;width:54.6px">China<i>中国</i></div>
<div class="c" style="left:728.8px;width:54.6px"><i>广东省深圳</i></div>
<div class="c" style="left:783.4px;width:54.6px"><i>主动咨询</i></div>
<div class="c" style="left:838px;width:54.6px"><i>留学总经办</i></div>
<div class="c" style="left:892.6px;width:54.6px"><i>口碑推荐</i>,<i>全</i></div>
<div class="c" style="left:1056.4px;width:54.6px"><i>无</i></div>
<div class="c" style="left:1111px;width:54.6px"><i>刘素佳</i></div>
<div class="c" style="left:1165.6px;width:54.6px"><i>未分配</i></div>
</div>
<div class="rh" style="top:396.09px">28</div>
<div class="row band" style="top:396.09px">
<div class="c r" style="left:0px;width:54.6px">207145</div>
<div class="c" style="left:54.6px;width:54.6px"><i>梁馨元</i> (<i>女</i></div>
<div class="c" style="left:109.2px;width:54.6px">China<i>中国</i></div>
<div class="c" style="left:163.8px;width:132px">142401200006041426</div>
<div class="tri" style="left:163.8px"></div>
<div class="c" style="left:295.8px;width:74.1px">+86 15536380123</div>
<div class="c" style="left:369.9px;width:85.9px">+86 18635050000</div>
<div class="c" style="left:455.8px;width:54.6px">1553638960</div>
<div class="c" style="left:510.4px;width:54.6px">1553638960</div>
<div class="c r" style="left:565px;width:54.6px">2000/6/4</div>
<div class="c" style="left:619.6px;width:54.6px">000000</div>
<div class="tri" style="left:619.6px"></div>
<div class="c" style="left:674.2px;width:54.6px">China<i>中国</i></div>
<div class="c" style="left:728.8px;width:54.6px"><i>北京市昌平</i></div>
<div class="c" style="left:783.4px;width:54.6px"><i>主动咨询</i></div>
<div class="c" style="left:838px;width:54.6px"><i>留学总经办</i></div>
<div class="c" style="left:892.6px;width:54.6px"><i>社交平台</i>,/</div>
<div class="c" style="left:1056.4px;width:54.6px"><i>无</i></div>
<div class="c" style="left:1111px;width:54.6px"><i>王迪</i></div>
<div class="c" style="left:1165.6px;width:54.6px"><i>未分配</i></div>
</div>
<div class="rh" style="top:410.76px">29</div>
<div class="row" style="top:410.76px">
<div class="vl" style="left:54.1px"></div>
<div class="vl" style="left:108.7px"></div>
<div class="vl" style="left:163.3px"></div>
<div class="vl" style="left:217.9px"></div>
<div class="vl" style="left:295.3px"></div>
<div class="vl" style="left:369.4px"></div>
<div class="vl" style="left:455.3px"></div>
<div class="vl" style="left:509.9px"></div>
<div class="vl" style="left:564.5px"></div>
<div class="vl" style="left:619.1px"></div>
<div class="vl" style="left:673.7px"></div>
<div class="vl" style="left:728.3px"></div>
<div class="vl" style="left:782.9px"></div>
<div class="vl" style="left:837.5px"></div>
<div class="vl" style="left:892.1px"></div>
<div class="vl" style="left:946.7px"></div>
<div class="vl" style="left:1001.3px"></div>
<div class="vl" style="left:1055.9px"></div>
<div class="vl" style="left:1110.5px"></div>
<div class="vl" style="left:1165.1px"></div>
<div class="vl" style="left:1219.7px"></div>
<div class="c r" style="left:0px;width:54.6px">207152</div>
<div class="c" style="left:54.6px;width:54.6px">wendy</div>
<div class="c" style="left:295.8px;width:74.1px">+86 18182281123</div>
<div class="c" style="left:369.9px;width:85.9px">+86 15823918663</div>
<div class="c" style="left:674.2px;width:54.6px">China<i>中国</i></div>
<div class="c" style="left:783.4px;width:54.6px"><i>被动咨询</i></div>
<div class="c" style="left:892.6px;width:54.6px"><i>合作方推荐者</i></div>
<div class="c" style="left:947.2px;width:54.6px"><i>曾老师</i></div>
<div class="c" style="left:1001.8px;width:54.6px"><i>凯烁曾老师</i></div>
<div class="c" style="left:1111px;width:54.6px"><i>未分配</i></div>
<div class="c" style="left:1165.6px;width:54.6px"><i>未分配</i></div>
</div>
<div class="rh" style="top:425.43px">30</div>
<div class="row band" style="top:425.43px">
<div class="c r" style="left:0px;width:54.6px">207147</div>
<div class="c" style="left:54.6px;width:54.6px"><i>赵君婷</i> (<i>女</i></div>
<div class="c" style="left:109.2px;width:54.6px">China<i>中国</i></div>
<div class="c" style="left:163.8px;width:132px">500108200203035125</div>
<div class="tri" style="left:163.8px"></div>
<div class="c" style="left:295.8px;width:74.1px">+86 15320563123</div>
<div class="c" style="left:369.9px;width:85.9px">+86 13399850473</div>
<div class="c" style="left:455.8px;width:54.6px">9566139340</div>
<div class="c" style="left:510.4px;width:54.6px">1532056390</div>
<div class="c r" style="left:565px;width:54.6px">2002/3/3</div>
<div class="c" style="left:619.6px;width:54.6px">000000</div>
<div class="tri" style="left:619.6px"></div>
<div class="c" style="left:674.2px;width:54.6px">China<i>中国</i></div>
<div class="c" style="left:728.8px;width:54.6px"><i>重庆市南岸</i></div>
<div class="c" style="left:783.4px;width:54.6px"><i>去电</i></div>
<div class="c" style="left:838px;width:54.6px"><i>留学总经办</i></div>
<div class="c" style="left:892.6px;width:54.6px"><i>合作项目</i>-<i>合</i></div>
<div class="c" style="left:1056.4px;width:54.6px"><i>无</i></div>
<div class="c" style="left:1111px;width:54.6px"><i>陈祖清</i></div>
<div class="c" style="left:1165.6px;width:54.6px"><i>未分配</i></div>
</div>
<div class="rh" style="top:440.1px">31</div>
<div class="row" style="top:440.1px">
<div class="vl" style="left:54.1px"></div>
<div class="vl" style="left:108.7px"></div>
<div class="vl" style="left:163.3px"></div>
<div class="vl" style="left:295.3px"></div>
<div class="vl" style="left:369.4px"></div>
<div class="vl" style="left:455.3px"></div>
<div class="vl" style="left:509.9px"></div>
<div class="vl" style="left:564.5px"></div>
<div class="vl" style="left:619.1px"></div>
<div class="vl" style="left:673.7px"></div>
<div class="vl" style="left:728.3px"></div>
<div class="vl" style="left:782.9px"></div>
<div class="vl" style="left:837.5px"></div>
<div class="vl" style="left:892.1px"></div>
<div class="vl" style="left:946.7px"></div>
<div class="vl" style="left:1001.3px"></div>
<div class="vl" style="left:1055.9px"></div>
<div class="vl" style="left:1110.5px"></div>
<div class="vl" style="left:1165.1px"></div>
<div class="vl" style="left:1219.7px"></div>
<div class="c r" style="left:0px;width:54.6px">207135</div>
<div class="c" style="left:54.6px;width:54.6px"><i>杨欣雨</i> (<i>女</i></div>
<div class="c" style="left:109.2px;width:54.6px">China<i>中国</i></div>
<div class="c" style="left:163.8px;width:132px">370105200210270824</div>
<div class="tri" style="left:163.8px"></div>
<div class="c" style="left:295.8px;width:74.1px">+44 07546918123</div>
<div class="c" style="left:369.9px;width:85.9px">+86 <i>田延岭</i>13954</div>
<div class="c" style="left:455.8px;width:54.6px">xyevents@</div>
<div class="c" style="left:510.4px;width:54.6px">gloria@uk####</div>
<div class="c r" style="left:565px;width:54.6px">##########</div>
<div class="c" style="left:619.6px;width:54.6px">000000</div>
<div class="tri" style="left:619.6px"></div>
<div class="c" style="left:674.2px;width:54.6px">China<i>中国</i></div>
<div class="c" style="left:728.8px;width:54.6px"><i>济南市历下</i></div>
<div class="c" style="left:783.4px;width:54.6px"><i>被动咨询</i></div>
<div class="c" style="left:838px;width:54.6px"><i>留学总经办</i></div>
<div class="c" style="left:892.6px;width:54.6px"><i>合作方推荐者</i></div>
<div class="c" style="left:947.2px;width:54.6px"><i>指南针张老</i></div>
<div class="c" style="left:1001.8px;width:54.6px"><i>指南针张老</i></div>
<div class="c" style="left:1056.4px;width:54.6px"><i>无</i></div>
<div class="c" style="left:1111px;width:54.6px"><i>强思喆</i></div>
<div class="c" style="left:1165.6px;width:54.6px"><i>未分配</i></div>
</div>
<div class="rh" style="top:454.77px">32</div>
<div class="row band" style="top:454.77px">
<div class="c r" style="left:0px;width:54.6px">207108</div>
<div class="c" style="left:54.6px;width:54.6px"><i>舒欣娴</i> (<i>女</i></div>
<div class="c" style="left:109.2px;width:54.6px">China<i>中国</i></div>
<div class="c" style="left:163.8px;width:132px">340826200106060020</div>
<div class="tri" style="left:163.8px"></div>
<div class="c" style="left:295.8px;width:74.1px">+86 19910568123</div>
<div class="c" style="left:369.9px;width:85.9px">+86 13006826638</div>
<div class="c" style="left:455.8px;width:54.6px">2445895960</div>
<div class="c" style="left:510.4px;width:54.6px">2445895960</div>
<div class="c r" style="left:565px;width:54.6px">2001/6/6</div>
<div class="c" style="left:619.6px;width:54.6px">301830</div>
<div class="tri" style="left:619.6px"></div>
<div class="c" style="left:674.2px;width:54.6px">China<i>中国</i></div>
<div class="c" style="left:728.8px;width:54.6px"><i>天津市宝坻</i></div>
<div class="c" style="left:783.4px;width:54.6px"><i>微信</i></div>
<div class="c" style="left:838px;width:54.6px"><i>留学总经办</i></div>
<div class="c" style="left:892.6px;width:54.6px"><i>口碑推荐</i>,<i>全</i></div>
<div class="c" style="left:1056.4px;width:54.6px"><i>无</i></div>
<div class="c" style="left:1111px;width:54.6px"><i>周江</i></div>
<div class="c" style="left:1165.6px;width:54.6px"><i>未分配</i></div>
</div>
<div class="rh" style="top:469.44px">33</div>
<div class="row" style="top:469.44px">
<div class="vl" style="left:54.1px"></div>
<div class="vl" style="left:108.7px"></div>
<div class="vl" style="left:163.3px"></div>
<div class="vl" style="left:295.3px"></div>
<div class="vl" style="left:369.4px"></div>
<div class="vl" style="left:455.3px"></div>
<div class="vl" style="left:509.9px"></div>
<div class="vl" style="left:564.5px"></div>
<div class="vl" style="left:619.1px"></div>
<div class="vl" style="left:673.7px"></div>
<div class="vl" style="left:728.3px"></div>
<div class="vl" style="left:782.9px"></div>
<div class="vl" style="left:837.5px"></div>
<div class="vl" style="left:892.1px"></div>
<div class="vl" style="left:946.7px"></div>
<div class="vl" style="left:1001.3px"></div>
<div class="vl" style="left:1055.9px"></div>
<div class="vl" style="left:1110.5px"></div>
<div class="vl" style="left:1165.1px"></div>
<div class="vl" style="left:1219.7px"></div>
<div class="c r" style="left:0px;width:54.6px">207088</div>
<div class="c" style="left:54.6px;width:54.6px"><i>包欣辰</i> (<i>女</i></div>
<div class="c" style="left:109.2px;width:54.6px">China<i>中国</i></div>
<div class="c" style="left:163.8px;width:132px">310103200212255069</div>
<div class="tri" style="left:163.8px"></div>
<div class="c" style="left:295.8px;width:74.1px">+86 15026953123</div>
<div class="c" style="left:369.9px;width:85.9px">+86 52734062</div>
<div class="c" style="left:455.8px;width:54.6px">150269534</div>
<div class="c r" style="left:565px;width:54.6px">##########</div>
<div class="c" style="left:619.6px;width:54.6px">200051</div>
<div class="tri" style="left:619.6px"></div>
<div class="c" style="left:674.2px;width:54.6px">China<i>中国</i></div>
<div class="c" style="left:728.8px;width:54.6px"><i>上海市长宁</i></div>
<div class="c" style="left:783.4px;width:54.6px"><i>被动咨询</i></div>
<div class="c" style="left:838px;width:54.6px"><i>留学总经办</i></div>
<div class="c" style="left:892.6px;width:54.6px"><i>社交平台</i>,/</div>
<div class="c" style="left:1056.4px;width:54.6px"><i>无</i></div>
<div class="c" style="left:1111px;width:54.6px"><i>蒯劲</i></div>
<div class="c" style="left:1165.6px;width:54.6px"><i>未分配</i></div>
</div>
<div class="rh" style="top:484.11px">34</div>
<div class="row band" style="top:484.11px">
<div class="c r" style="left:0px;width:54.6px">207071</div>
<div class="c" style="left:54.6px;width:54.6px"><i>黄嘉仪</i> (<i>女</i></div>
<div class="c" style="left:109.2px;width:54.6px">China<i>中国</i></div>
<div class="c" style="left:163.8px;width:132px">654101200007050581</div>
<div class="tri" style="left:163.8px"></div>
<div class="c" style="left:295.8px;width:74.1px">+86 18099519123</div>
<div class="c" style="left:369.9px;width:85.9px">+86 18999371665</div>
<div class="c" style="left:455.8px;width:54.6px">1809951910</div>
<div class="c" style="left:510.4px;width:54.6px">1809951910</div>
<div class="c r" style="left:565px;width:54.6px">2000/7/5</div>
<div class="c" style="left:619.6px;width:54.6px">835000</div>
<div class="tri" style="left:619.6px"></div>
<div class="c" style="left:674.2px;width:54.6px">China<i>中国</i></div>
<div class="c" style="left:728.8px;width:54.6px"><i>新疆维吾尔</i></div>
<div class="c" style="left:783.4px;width:54.6px"><i>主动咨询</i></div>
<div class="c" style="left:838px;width:54.6px"><i>留学总经办</i></div>
<div class="c" style="left:892.6px;width:54.6px"><i>雅思考点</i>,<i>雅</i></div>
<div class="c" style="left:1056.4px;width:54.6px"><i>无</i></div>
<div class="c" style="left:1111px;width:54.6px"><i>刘紫馨</i></div>
<div class="c" style="left:1165.6px;width:54.6px"><i>未分配</i></div>
</div>
<div class="rh" style="top:498.78px">35</div>
<div class="row" style="top:498.78px">
<div class="vl" style="left:54.1px"></div>
<div class="vl" style="left:108.7px"></div>
<div class="vl" style="left:163.3px"></div>
<div class="vl" style="left:295.3px"></div>
<div class="vl" style="left:369.4px"></div>
<div class="vl" style="left:455.3px"></div>
<div class="vl" style="left:509.9px"></div>
<div class="vl" style="left:564.5px"></div>
<div class="vl" style="left:619.1px"></div>
<div class="vl" style="left:673.7px"></div>
<div class="vl" style="left:728.3px"></div>
<div class="vl" style="left:782.9px"></div>
<div class="vl" style="left:837.5px"></div>
<div class="vl" style="left:892.1px"></div>
<div class="vl" style="left:946.7px"></div>
<div class="vl" style="left:1001.3px"></div>
<div class="vl" style="left:1055.9px"></div>
<div class="vl" style="left:1110.5px"></div>
<div class="vl" style="left:1165.1px"></div>
<div class="vl" style="left:1219.7px"></div>
<div class="c r" style="left:0px;width:54.6px">207073</div>
<div class="c" style="left:54.6px;width:54.6px"><i>胡睿琪</i> (<i>女</i></div>
<div class="c" style="left:109.2px;width:54.6px">China<i>中国</i></div>
<div class="c" style="left:163.8px;width:132px">610104200212213421</div>
<div class="tri" style="left:163.8px"></div>
<div class="c" style="left:295.8px;width:74.1px">+86 15319918123</div>
<div class="c" style="left:369.9px;width:85.9px">+86 13359257060</div>
<div class="c" style="left:455.8px;width:54.6px">7991387820</div>
<div class="c" style="left:510.4px;width:54.6px">hrq153199</div>
<div class="c r" style="left:565px;width:54.6px">##########</div>
<div class="c" style="left:619.6px;width:54.6px">710000</div>
<div class="tri" style="left:619.6px"></div>
<div class="c" style="left:674.2px;width:54.6px">China<i>中国</i></div>
<div class="c" style="left:728.8px;width:54.6px"><i>陕西省西安</i></div>
<div class="c" style="left:838px;width:54.6px"><i>留学总经办</i></div>
<div class="c" style="left:892.6px;width:54.6px"><i>平台合作方式</i></div>
<div class="c" style="left:1056.4px;width:54.6px"><i>无</i></div>
<div class="c" style="left:1111px;width:54.6px"><i>钦冰</i></div>
<div class="c" style="left:1165.6px;width:54.6px"><i>未分配</i></div>
</div>
<div class="rh" style="top:513.45px">36</div>
<div class="row band" style="top:513.45px">
<div class="c r" style="left:0px;width:54.6px">207062</div>
<div class="c" style="left:54.6px;width:54.6px"><i>周子璐</i> (<i>女</i></div>
<div class="c" style="left:109.2px;width:54.6px">China<i>中国</i></div>
<div class="c" style="left:163.8px;width:132px">511302200208200025</div>
<div class="tri" style="left:163.8px"></div>
<div class="c" style="left:295.8px;width:74.1px">+86 15196786123</div>
<div class="c" style="left:369.9px;width:85.9px">+86 15808419993</div>
<div class="c" style="left:455.8px;width:54.6px">2703352200</div>
<div class="c" style="left:510.4px;width:54.6px">consultingx</div>
<div class="c r" style="left:565px;width:54.6px">2002/8/20</div>
<div class="c" style="left:619.6px;width:54.6px">000000</div>
<div class="tri" style="left:619.6px"></div>
<div class="c" style="left:674.2px;width:54.6px">China<i>中国</i></div>
<div class="c" style="left:728.8px;width:54.6px"><i>四川省南充</i></div>
<div class="c" style="left:783.4px;width:54.6px"><i>被动咨询</i></div>
<div class="c" style="left:838px;width:54.6px"><i>留学总经办</i></div>
<div class="c" style="left:892.6px;width:54.6px"><i>社交平台</i>,/</div>
<div class="c" style="left:1056.4px;width:54.6px"><i>无</i></div>
<div class="c" style="left:1111px;width:54.6px"><i>何雨涛</i></div>
<div class="c" style="left:1165.6px;width:54.6px"><i>未分配</i></div>
</div>
<div class="sel1"></div>
</div>

<!-- vscroll -->
<div class="a" style="left:1231px;top:144px;width:11px;height:523px;background:#f0f1f2"></div>
<div class="a" style="left:1233.7px;top:165px;width:5px;height:33px;background:#cfd1d4;border-radius:3px"></div>

<!-- sheet tabs -->
<div class="a" style="left:0;top:666.6px;width:1242px;height:17.6px;background:#e9ecef"></div>
<div class="a" style="left:68px;top:666.6px;width:67px;height:16px;background:#fff;border-radius:0 0 4px 4px"></div>
<div class="a" style="left:76px;top:668.5px;color:#0e6b5f;font-size:8.4px;font-weight:bold;line-height:14px">11_28_5_1000</div>
<div class="a" style="left:144.5px;top:668.5px;font-size:8.6px;line-height:14px;color:#1f1f1f">Sheet1</div>
<div class="sep" style="left:178px;top:670px;height:11px"></div>
<div class="sep" style="left:734px;top:672px;height:6px;background:#999"></div>
<div class="a" style="left:753px;top:672.8px;width:249px;height:5px;background:#d6d8db;border-radius:3px"></div>
<div class="sep" style="left:1228.5px;top:672px;height:6px;background:#999"></div>
<!-- status bar -->
<div class="a" style="left:0;top:684px;width:1280px;height:16px;background:#e8ebef;border-top:1px solid #d5d8dc"></div>
<div class="a" style="left:25.8px;top:686px;font-size:8.2px;line-height:12px;color:#333">业财管理系统</div>
<div class="sep" style="left:93px;top:688px;height:8px"></div>
<div class="sep" style="left:120.3px;top:688px;height:8px"></div>
<div class="sep" style="left:1015.6px;top:688px;height:8px"></div>
<div class="sep" style="left:1085px;top:688px;height:8px"></div>
<div class="a" style="left:1022px;top:685px;width:14px;height:15px;background:#d9dcdf;border-radius:2px"></div>
<div class="a" style="left:1096px;top:686.5px;font-size:9px;line-height:12px;color:#333">115%</div>
<!-- IME -->
<div class="a" style="left:1170px;top:677.5px;width:89px;height:17px;background:#fff;border:1px solid #c9d3e0"></div>

<svg id="icons" width="1280" height="700" viewBox="0 0 1280 700" fill="none" stroke="#333" stroke-width="1">
<!-- app tabs -->
<path d="M14 10.5 L16.5 17.5 L19.5 12 L22.5 17.5 L25 10.5" stroke="#e8392e" stroke-width="1.8" stroke-linejoin="round"/>
<path d="M45.5 9.5 h3.5 a4.8 4.8 0 0 1 0 9.6 h-5 z" fill="#f0562b" stroke="none"/>
<path d="M47.5 16.5 l2.5 -4 M48 13 l1 2" stroke="#fff" stroke-width="1"/>
<!-- active tab icons -->
<rect x="135.5" y="12" width="8" height="5" rx="1" stroke="#999"/>
<path d="M139.5 17 v1.5 M137.5 18.5 h4" stroke="#999"/>
<path d="M150.5 11.5 l5 5 M155.5 11.5 l-5 5" stroke="#888" stroke-width="1.1"/>
<!-- + v -->
<path d="M1069 14.5 h8.5 M1073.2 10.2 v8.5" stroke="#333" stroke-width="1.2"/>
<path d="M1084.5 13.5 l2 2 l2 -2" stroke="#333"/>
<!-- window controls -->
<rect x="1137" y="10.5" width="8" height="8" rx="1.5" stroke="#444"/>
<path d="M1139 10.5 a1.5 1.5 0 0 1 1.5 -1.5 h4.5 a1.5 1.5 0 0 1 1.5 1.5 v4.5 a1.5 1.5 0 0 1 -1.5 1.5" stroke="#444"/>
<path d="M1138.5 9.5 v-1 h7 a1 1 0 0 1 1 1 v7" stroke="#444" stroke-width="0"/>
<path d="M1158.5 10 l4.5 -2.2 l4.5 2.2 v5.2 l-4.5 2.3 l-4.5 -2.3 z M1158.5 10 l4.5 2.4 l4.5 -2.4 M1163 12.4 v5" stroke="#444"/>
<path d="M1210 13.5 h7" stroke="#999" stroke-width="1.2"/>
<rect x="1235.5" y="10.5" width="7" height="7" stroke="#444"/>
<path d="M1237.5 10.5 v-2 h7 v7 h-2" stroke="#444"/>
<path d="M1261.5 9.5 l7.5 7.5 M1269 9.5 l-7.5 7.5" stroke="#444"/>
<!-- menu row left -->
<path d="M13 33 h5.5 M13 36 h5.5 M13 39 h5.5" stroke="#444"/>
<path d="M46.5 35.5 l1.8 1.8 l1.8 -1.8" stroke="#444"/>
<path d="M68.5 32.5 h6.5 l2.5 2.5 v6.3 h-9 z M70.5 41.3 v-3.5 h5 v3.5 M70.5 32.5 v2.5 h4" stroke="#444"/>
<path d="M88.5 36.5 a3 3 0 1 1 2.5 1.8 l-3.3 1.5 a1.3 1.3 0 1 1 -1.2 -0.8" stroke="#444" stroke-width="1.1"/>
<path d="M104.5 35 v-2.5 h6 v2.5 M102.5 35 h10 v4 h-2 M104.5 39 h-2 v-4 M104.5 37.5 h6 v4 h-6 z" stroke="#444"/>
<path d="M122.5 35.5 v-2.5 h5.5 v2.5 M120.5 39.5 v-4 h9.5 v1.5 M122.5 38.5 v2.5 h1.5" stroke="#444"/>
<circle cx="127" cy="39" r="2.3" stroke="#444"/>
<path d="M128.7 40.7 l1.6 1.6" stroke="#444"/>
<path d="M140.5 33 l-2.2 2.2 l2.8 0.8 M138.5 35.2 c2.5 -1.2 6.5 -0.5 6.5 2.3 c0 2 -2.5 3.2 -4 3.6" stroke="#444" stroke-width="1.1"/>
<path d="M161 33 l2.2 2.2 l-2.8 0.8 M163 35.2 c-2.5 -1.2 -6.5 -0.5 -6.5 2.3 c0 2 2.5 3.2 4 3.6" stroke="#bbb" stroke-width="1.1"/>
<path d="M174 35.5 l3 3 l3 -3" stroke="#444"/>
<!-- WPS AI logo + search -->
<path d="M733.5 39.8 h3 l3.6 -6.8 h-3 z" fill="#2b6cf0" stroke="none"/>
<path d="M738.6 36.3 l2 -0.8 l3.2 4.3 h-2.6 z" fill="#f04aa0" stroke="none"/>
<path d="M740.8 38.5 l1.2 1.3 h1.8 l-0.8 -1.1 z" fill="#f78a4a" stroke="none"/>
<circle cx="787.5" cy="36" r="3.8" stroke="#444"/>
<path d="M790.3 38.8 l2.7 2.7" stroke="#444"/>
<!-- cloud -->
<path d="M1218.5 40.5 h5 a2.8 2.8 0 0 0 1 -4.8 a3.6 3.6 0 0 0 -7 0 a2.8 2.8 0 0 0 1 4.8 z" stroke="#444" stroke-width="1.1"/>
<path d="M1221 39 v-3.5 M1219.6 36.8 l1.4 -1.4 l1.4 1.4" stroke="#2f6ff0" stroke-width="1"/>
<!-- share icon -->
<path d="M1238.5 39 v3 h8 v-3 M1240.5 38 a3 3 0 0 1 3 -3 h3 M1245 33 l2 2 l-2 2" stroke="#fff"/>
<!-- ribbon group 1 -->
<path d="M27.5 62.5 h10 l0.8 8.8 h-11.6 z M30.8 62.5 v-3 a1.2 1.2 0 0 1 2.4 0 v3" stroke="#333"/>
<path d="M28.5 64.8 h8" stroke="#f0a060" stroke-width="1.2"/>
<path d="M35 70 l0.5 -1.5" stroke="#333"/>
<path d="M64 71.5 h-7.5 v-11 h10.5 v2.5 M59.5 60.5 v-1.8 h4 v1.8" stroke="#333"/>
<rect x="64.5" y="63.5" width="5" height="8" stroke="#333"/>
<rect x="66" y="64.8" width="2" height="5.5" fill="#2f7bf5" stroke="none"/>
<path d="M84.5 60 l5.5 7 M90.5 60 l-5.5 7" stroke="#333"/>
<circle cx="83.8" cy="67.3" r="1.8" stroke="#2f7bf5"/>
<circle cx="91.2" cy="67.3" r="1.8" stroke="#2f7bf5"/>
<path d="M86.5 85 h-3 v-6.5 h6.5 v2" stroke="#2f7bf5"/>
<path d="M87.5 81 h4 l2.5 2.5 v5 h-6.5 z" stroke="#333"/>
<path d="M70.5 83 l1.5 1.5 l1.5 -1.5 M97.8 83 l1.5 1.5 l1.5 -1.5" stroke="#333"/>
<path d="M105.5 87.5 l3 3 M108.5 88 v2.5 h-2.5" stroke="#666" stroke-width="0.9"/>
<!-- font group -->
<path d="M210.5 63.5 l3 2.5 l3 -2.5 M250.5 63.5 l3 2.5 l3 -2.5" stroke="#555"/>
<path d="M267.5 69 l3 -8 l3 8 M268.8 66.5 h3.5" stroke="#333"/>
<path d="M274.5 62 h4 M276.5 60 v4" stroke="#2f7bf5"/>
<path d="M285.5 69 l3 -8 l3 8 M286.8 66.5 h3.5" stroke="#333"/>
<path d="M290.5 61 h5.5" stroke="#7fb0f8" stroke-width="1.3"/>
<path d="M123 79.3 h3.3 a1.8 1.8 0 0 1 0 3.6 h-3.3 z M123 82.9 h3.8 a1.8 1.8 0 0 1 0 3.6 h-3.8 z" stroke="#222" stroke-width="1.3"/>
<path d="M143 79.5 h4 M140 86.5 h4 M145 79.5 l-2 7" stroke="#333"/>
<path d="M160 79 v4.5 a2.5 2.5 0 0 0 5 0 v-4.5 M159 87 h7" stroke="#333"/>
<path d="M178 86.5 l3.3 -7.5 l3.3 7.5 M177 83.5 h8.5" stroke="#333"/>
<rect x="196.5" y="79" width="9" height="8.5" rx="1.5" stroke="#555"/>
<path d="M201 79 v8.5 M196.5 83.2 h9" stroke="#555"/>
<path d="M210.5 83 l1.5 1.5 l1.5 -1.5 M237 83 l1.5 1.5 l1.5 -1.5 M264 83 l1.5 1.5 l1.5 -1.5 M290 83 l1.5 1.5 l1.5 -1.5" stroke="#333"/>
<path d="M225 81.5 l3.5 -3 l3.5 3.5 l-3 3 z M226 78.5 h2" stroke="#333"/>
<rect x="223.5" y="85.5" width="9.5" height="3" rx="1" fill="#f5e800" stroke="#e89a20" stroke-width="0.8"/>
<path d="M251.5 84.5 l3 -6.5 l3 6.5 M252.5 82.5 h4" stroke="#333"/>
<rect x="249" y="85.5" width="10.5" height="3.2" rx="1.2" fill="#e8390d" stroke="none"/>
<path d="M277 84 l5 -5.5 l3.5 3.5 l-4 4.5 h-2.5 z M279.5 81.5 l3.5 3.5 M279.5 88 h7" stroke="#333"/>
<path d="M298 87.5 l3 3 M301 88 v2.5 h-2.5" stroke="#666" stroke-width="0.9"/>
<!-- alignment group -->
<path d="M314 61.5 h8 M315.5 63.5 h5" stroke="#333"/>
<rect x="333" y="62.5" width="7.5" height="4.5" fill="#aaa" stroke="none"/>
<path d="M352 66.5 h7 M351.5 68.5 h8" stroke="#333"/>
<path d="M369 60.8 h9 M369 68.8 h9 M375 65 h3" stroke="#999" stroke-width="1.2"/>
<path d="M372.5 63 l-2.5 2 l2.5 2" stroke="#2f7bf5" stroke-width="1.3"/>
<path d="M388 60.8 h9 M388 68.8 h9 M394 65 h3" stroke="#999" stroke-width="1.2"/>
<path d="M389.5 63 l2.5 2 l-2.5 2" stroke="#2f7bf5" stroke-width="1.3"/>
<path d="M313 80.3 h9 M313 83.4 h5" stroke="#333"/>
<path d="M313 86.8 h9" stroke="#999" stroke-width="1.2"/>
<path d="M332 80.3 h9 M334 83.4 h5" stroke="#333"/>
<path d="M332 86.8 h9" stroke="#999" stroke-width="1.2"/>
<path d="M351 80.3 h9 M355 83.4 h5" stroke="#333"/>
<path d="M351 86.8 h9" stroke="#999" stroke-width="1.2"/>
<path d="M369 80.3 h9 M369 83.4 h9" stroke="#333"/>
<path d="M369 86.8 h9" stroke="#999" stroke-width="1.2"/>
<path d="M387.5 79 v9 M397.5 79 v9 M389.5 84.5 h6.5" stroke="#333"/>
<path d="M389.5 87 h6.5" stroke="#999"/>
<path d="M391 80 l-1 1 l1 1 M395 80 l1 1 l-1 1" stroke="#2f7bf5"/>
<!-- wrap -->
<rect x="411.5" y="59.5" width="13.5" height="12.5" rx="1" stroke="#333" stroke-width="1.1"/>
<path d="M414 62.9 h8" stroke="#999" stroke-width="1.1"/>
<path d="M414 65.4 h7.5 M414 68.4 h4.5" stroke="#333"/>
<path d="M424.5 65 v5.5 h-3" stroke="#1a9a5a" stroke-width="1.3"/>
<rect x="419" y="69.5" width="3" height="2.5" fill="#fff" stroke="none"/>
<path d="M421.5 70.5 h-1.5" stroke="#1a9a5a" stroke-width="1.8"/>
<!-- merge -->
<rect x="440.5" y="59.5" width="13" height="11" rx="0.5" stroke="#bbb"/>
<path d="M440.5 63.5 h13 M449.5 59.5 v4 M444.5 59.5 v4" stroke="#bbb"/>
<path d="M443 67 h8" stroke="#ccc" stroke-width="1.2"/>
<path d="M455 83 l1.5 1.5 l1.5 -1.5" stroke="#bbb"/>
<path d="M461.5 87.5 l3 3 M464.5 88 v2.5 h-2.5" stroke="#666" stroke-width="0.9"/>
<!-- number group -->
<path d="M518 63.5 l3 2.5 l3 -2.5" stroke="#555"/>
<path d="M537 60 h5 a1.5 1.5 0 0 1 1.5 1.5 v5.5 M541 68.5 h-5 a1.5 1.5 0 0 1 -1.5 -1.5 v-5.5" stroke="#333"/>
<path d="M534 61.5 l2.5 -2 v4 z M544 67 l-2.5 -2 v4 z" fill="#333" stroke="none"/>
<path d="M566 64 l1.8 1.8 l1.8 -1.8" stroke="#333"/>
<path d="M479 79 l2 2.2 l2 -2.2 M478 82.2 h6.5 M478 84.8 h6.5 M481.2 81.5 v6.3" stroke="#333" stroke-width="1.1"/>
<path d="M491.5 83.3 l1.5 1.5 l1.5 -1.5" stroke="#333"/>
<path d="M507 87.5 l6 -8.5" stroke="#333"/>
<circle cx="507.5" cy="80.5" r="1.3" stroke="#333"/>
<circle cx="513.5" cy="86" r="1.5" stroke="#333"/>
<text x="523.8" y="83.3" font-size="5.6" font-weight="bold" font-family="Liberation Sans" fill="#333" stroke="none" letter-spacing="-0.2">000</text>
<path d="M528.8 85 v2.8" stroke="#333" stroke-width="1.2"/>
<path d="M546 79.5 l-2 1.7 l2 1.7" stroke="#333" stroke-width="0.9"/>
<text x="546.5" y="83.3" font-size="5.6" font-weight="bold" font-family="Liberation Sans" fill="#333" stroke="none">.0</text>
<text x="544.5" y="88.5" font-size="5.6" font-weight="bold" font-family="Liberation Sans" fill="#333" stroke="none" letter-spacing="-0.2">.00</text>
<text x="563" y="83.3" font-size="5.6" font-weight="bold" font-family="Liberation Sans" fill="#333" stroke="none" letter-spacing="-0.2">.00</text>
<path d="M562.5 86.2 h3.5 M564.5 84.5 l1.8 1.7 l-1.8 1.7" stroke="#333" stroke-width="0.9"/>
<text x="566" y="88.5" font-size="5.6" font-weight="bold" font-family="Liberation Sans" fill="#333" stroke="none">.0</text>
<path d="M574.5 87.5 l3 3 M577.5 88 v2.5 h-2.5" stroke="#666" stroke-width="0.9"/>
<!-- rows & cols -->
<rect x="590.5" y="59.5" width="3.5" height="3" stroke="#1a9a5a" stroke-width="1.2"/>
<path d="M590.5 63.5 v6 h3.5 v-6 M590.5 66.5 h3.5 M595.5 60 h2.5 v2.5 M598 60 h2.5 v3" stroke="#333"/>
<path d="M631 63.5 l1.8 1.8 l1.8 -1.8 M631 82.5 l1.8 1.8 l1.8 -1.8" stroke="#333"/>
<path d="M590.5 86 v-7.5 h10 v9 h-3 M593.5 78.5 v9" stroke="#333"/>
<path d="M595.5 80.5 h4" stroke="#999"/>
<path d="M590.5 87 v1.5 h4.5 v-1" stroke="#1a9a5a" stroke-width="1.2"/>
<!-- conditional format -->
<rect x="667" y="59.5" width="12.5" height="12" stroke="#333" stroke-dasharray="1.5 1"/>
<path d="M670.5 59.5 v12 M670.5 63.5 h8 M670.5 67.5 h8 M676.5 63.5 v4" stroke="#333"/>
<path d="M688.5 83 l1.5 1.5 l1.5 -1.5 M751 64 l1.5 1.5 l1.5 -1.5 M759.5 83 l1.5 1.5 l1.5 -1.5" stroke="#333"/>
<path d="M704.5 66.5 h-3 v-7 h7 v2.5 M704.5 59.5 v5 M701.5 62.5 h5" stroke="#333"/>
<path d="M712 61.5 l-5.5 5.5 l-1.5 3 l3 -1.5 l5 -5.5" stroke="#e5852a" stroke-width="1.1"/>
<rect x="702.5" y="79.5" width="8.5" height="8" stroke="#333"/>
<path d="M701.5 79.5 h2 M710 79.5 h2 M701.5 87.5 h2 M710 87.5 h2" stroke="#333" stroke-width="1.6"/>
<!-- fill, sum, sort -->
<rect x="786.5" y="59" width="12.3" height="12.3" stroke="#333" stroke-width="1.1"/>
<path d="M786.5 62.5 h12.3" stroke="#999" stroke-width="1.1"/>
<path d="M792.6 64 v5 M790.5 67 l2.1 2.1 l2.1 -2.1" stroke="#333"/>
<path d="M800 83 l1.5 1.5 l1.5 -1.5 M830.5 83 l1.5 1.5 l1.5 -1.5 M861.5 83 l1.5 1.5 l1.5 -1.5 M892 83 l1.5 1.5 l1.5 -1.5 M922.5 83 l1.5 1.5 l1.5 -1.5 M953 83 l1.5 1.5 l1.5 -1.5" stroke="#333"/>
<path d="M828.5 60.5 v-1 h-11 l5.3 5.8 l-5.3 5.8 h11 v-1" stroke="#333" stroke-width="1.1"/>
<path d="M848 71 l2.5 -11.5 h3.5 v11.5 z M849.5 67 h4.5" stroke="#333"/>
<path d="M857.5 60 v10 M855.3 68 l2.2 2.5 l2.2 -2.5" stroke="#2f7bf5" stroke-width="1.1"/>
<!-- filter -->
<path d="M879 59.5 h12 l-4 6.5 v6 l-2.5 1 v-7 z" stroke="#333"/>
<path d="M882.5 61.7 h5" stroke="#1a9a5a" stroke-width="1.1"/>
<!-- freeze -->
<rect x="908.5" y="59.5" width="13" height="12" stroke="#333"/>
<path d="M908.5 65.5 h13 M914.5 59.5 v12" stroke="#1a9a5a" stroke-width="1.2"/>
<path d="M909 60 l5 5 M909 66 l5 5" stroke="#777" stroke-width="0.8"/>
<!-- find -->
<circle cx="944" cy="63.7" r="4.7" stroke="#333"/>
<path d="M947.5 67.2 l5 5" stroke="#333"/>
<!-- formula -->
<path d="M105.5 112.5 l3 2.8 l3 -2.8" stroke="#666"/>
<circle cx="142.5" cy="113" r="3.8" stroke="#333"/>
<path d="M141 112 h3 M141 114 h3 M145.3 115.8 l2.3 2.3" stroke="#333"/>
<text x="158.5" y="117" font-size="10.5" font-style="italic" font-family="Liberation Serif" fill="#444" stroke="none">fx</text>
<!-- corner tri -->
<path d="M16.5 134 v5.2 h-5.2 z" fill="#666" stroke="none"/>
<!-- fill handle / right panel -->
<path d="M1257.5 116.5 h8" stroke="#777" stroke-width="1.2"/>
<path d="M1256.5 132 l9 3.5 l-4 1 l3.5 3.5 l-1.2 1.2 l-3.5 -3.5 l-1 3.8 z" stroke="#333"/>
<path d="M1256.5 162 h9 M1256.5 166 h9" stroke="#999"/>
<circle cx="1259" cy="162" r="1.4" fill="#e9ecef" stroke="#999"/>
<circle cx="1263" cy="166" r="1.4" fill="#e9ecef" stroke="#999"/>
<path d="M1256 195 v-10 M1256 185 h10 M1266 185 v6 a2 2 0 0 1 -2 2 h-6 M1260 191 l-2 2 l2 2" stroke="#aaa"/>
<path d="M1259.5 213.5 l6 6 a1.3 1.3 0 0 1 -1.8 1.8 l-6 -6 a1.3 1.3 0 0 1 1.8 -1.8 z" stroke="#333"/>
<path d="M1263 212 l3 3 M1266 212 l-3 3 M1256.5 219.5 l2 2" stroke="#333"/>
<path d="M1256.5 249 v-4.5 a5 5 0 0 1 9.5 -2.5 M1259 247 a2.2 2.2 0 0 1 4 -1 M1263 247 l3 -3 M1263 249 l2.5 -2" stroke="#333"/>
<path d="M1256.5 265 h9 v3 M1256.5 265 v11 l3 -1.5 h2" stroke="#333"/>
<circle cx="1263" cy="272" r="2.2" stroke="#333"/>
<path d="M1264.6 273.6 l1.8 1.8" stroke="#333"/>
<circle cx="1261.5" cy="297" r="4.8" stroke="#333"/>
<text x="1259.2" y="299.8" font-size="7" font-family="Liberation Sans" fill="#333" stroke="none">?</text>
<circle cx="1258" cy="324" r="0.9" fill="#444" stroke="none"/>
<circle cx="1261.5" cy="324" r="0.9" fill="#444" stroke="none"/>
<circle cx="1265" cy="324" r="0.9" fill="#444" stroke="none"/>
<!-- vscroll arrows -->
<path d="M1233.5 149 h5" stroke="#888"/>
<path d="M1236 154.5 l2 2.5 h-4 z" fill="#555" stroke="none"/>
<path d="M1234.5 657.5 h4 l-2 2.5 z" fill="#555" stroke="none"/>
<path d="M747 673.5 v3.5 l-2.2 -1.75 z" fill="#555" stroke="none"/>
<path d="M1216 673.5 v3.5 l2.2 -1.75 z" fill="#555" stroke="none"/>
<!-- sheet nav -->
<path d="M10 672.5 v6 M15.5 672.5 l-3.5 3 l3.5 3" stroke="#888"/>
<path d="M28.5 672.5 l-3.5 3 l3.5 3" stroke="#888"/>
<path d="M40.5 672.5 l3.5 3 l-3.5 3" stroke="#888"/>
<path d="M52.5 672.5 l3.5 3 l-3.5 3 M58.5 672.5 v6" stroke="#888"/>
<path d="M183.5 676.2 h6.5 M186.75 673 v6.5" stroke="#333" stroke-width="1.4"/>
<!-- status icons -->
<circle cx="18.5" cy="691.5" r="4.8" stroke="#444"/>
<circle cx="18" cy="690" r="1.6" stroke="#444"/>
<path d="M15.5 694.5 a2.8 2.8 0 0 1 5 0" stroke="#444"/>
<path d="M80.5 693 l2 -1.8 l2 1.8" stroke="#666"/>
<path d="M102.5 688.5 h9 M105.5 688.5 v7 M108.5 688.5 v4 h2.5 v-2 M102.5 691.5 h2" stroke="#444"/>
<path d="M130 688.5 h8.5 M130 688.5 v7.5 h8.5 M133.5 688.5 v7.5 M134.5 691 h4 M134.5 693.5 h4" stroke="#444"/>
<path d="M965 692 q5 -5 10 0 q-5 5 -10 0 z" stroke="#444"/>
<circle cx="970" cy="692" r="1.5" stroke="#444"/>
<path d="M992.5 688 v8.5 M988.5 692.3 h8.5" stroke="#444"/>
<circle cx="992.5" cy="692.3" r="2.5" stroke="#444" fill="#e8ebef"/>
<path d="M1001.5 691.5 l1.5 1.5 l1.5 -1.5 M1125 691.5 l1.5 1.5 l1.5 -1.5" stroke="#333"/>
<rect x="1025.5" y="689" width="8.5" height="7" stroke="#333"/>
<path d="M1025.5 691.5 h8.5 M1028.5 689 v7" stroke="#333"/>
<rect x="1046.5" y="689" width="8.5" height="7" stroke="#333"/>
<path d="M1050.75 689 v7" stroke="#333"/>
<rect x="1068" y="689" width="8.5" height="7" stroke="#333"/>
<path d="M1068 694 h6 v-5" stroke="#333"/>
<path d="M1141.5 691.5 h8" stroke="#444" stroke-width="1.4"/>
<path d="M1260.5 690.5 v-3 h3 M1268.5 690.5 v-3 h-3 M1260.5 692.5 v3 h3 M1268.5 692.5 v3 h-3" stroke="#444"/>
<!-- sogou IME -->
<g transform="rotate(-12 1167 684.5)">
<rect x="1158.5" y="675.5" width="17.5" height="17.5" rx="3.5" fill="#f0522a" stroke="none"/>
</g>
<path d="M1172 679.5 q-5 -1.8 -8 0.8 q-1.5 2 3 3 q5 1 2.5 3.8 q-3 2 -7.5 0" stroke="#fff" stroke-width="2.2"/>
<text x="1181" y="690.5" font-size="10.5" font-weight="bold" fill="#1e6fe0" stroke="#1e6fe0" stroke-width="0.3">中</text>
<circle cx="1200.5" cy="684.5" r="1.2" fill="#1e6fe0" stroke="none"/>
<path d="M1206 685.5 q0.5 2 -1 3.5" stroke="#1e6fe0" stroke-width="1.5"/>
<rect x="1217" y="680" width="3.5" height="6" rx="1.75" fill="#1e6fe0" stroke="none"/>
<path d="M1215.5 684 a3.3 3.3 0 0 0 6.5 0 M1218.75 687.5 v2" stroke="#1e6fe0" stroke-width="1.1"/>
<rect x="1230.5" y="681.5" width="9.5" height="6.5" rx="1" stroke="#1e6fe0" stroke-width="1.3"/>
<path d="M1232.5 686 h5.5" stroke="#1e6fe0"/>
<rect x="1247" y="680.5" width="3.5" height="3.5" rx="0.8" fill="#1e6fe0" stroke="none"/>
<rect x="1251.5" y="680.5" width="3.5" height="3.5" rx="0.8" fill="#1e6fe0" stroke="none"/>
<rect x="1247" y="685" width="3.5" height="3.5" rx="0.8" fill="#1e6fe0" stroke="none"/>
<rect x="1251.5" y="685" width="3.5" height="3.5" rx="0.8" fill="#1e6fe0" stroke="none"/>

</svg>
</body></html>
